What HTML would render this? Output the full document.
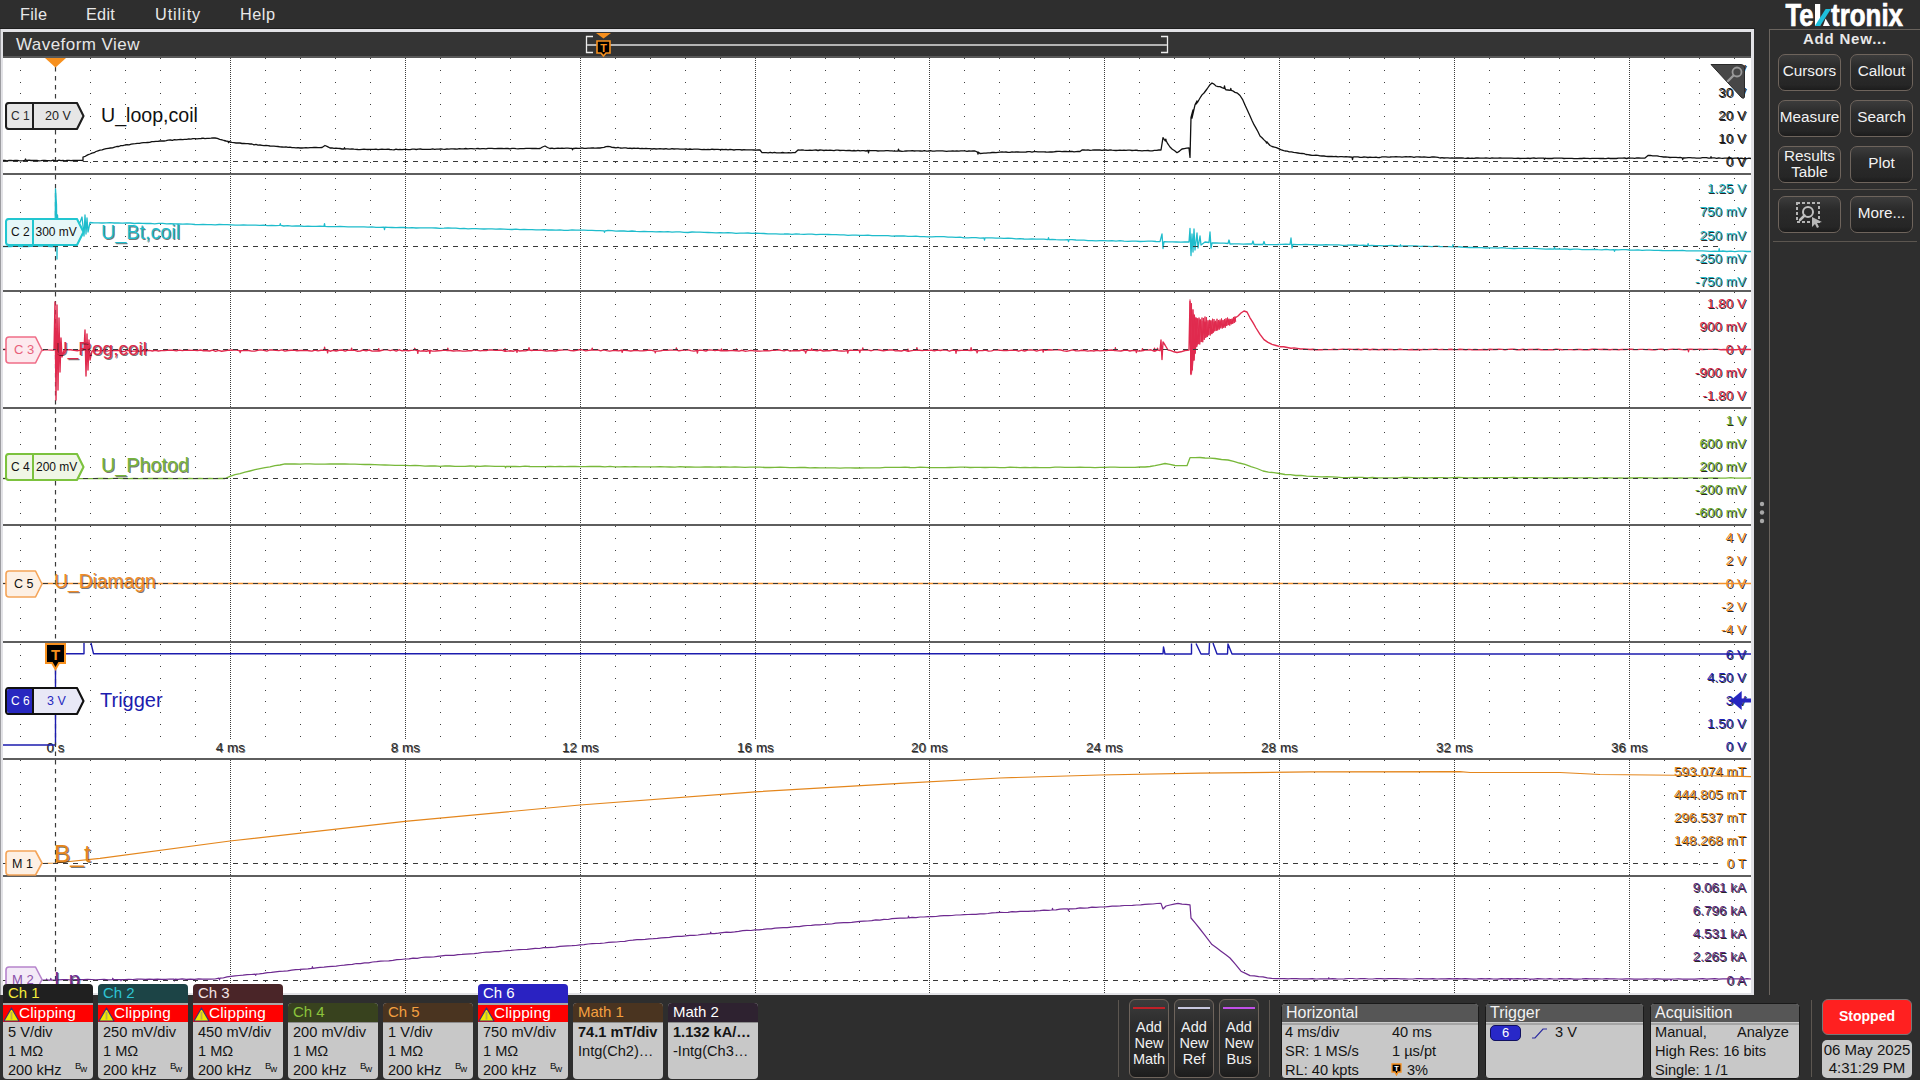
<!DOCTYPE html><html><head><meta charset="utf-8"><title>Tektronix Waveform View</title><style>html,body{margin:0;padding:0;}body{width:1920px;height:1080px;overflow:hidden;position:relative;background:#2e2e2e;font-family:"Liberation Sans", sans-serif;}.a{position:absolute;white-space:nowrap;}.menu{color:#e8e8e8;font-size:16.3px;top:4.5px;letter-spacing:0.25px}.btn{position:absolute;box-sizing:border-box;border:1px solid #6e645c;border-radius:7px;background:linear-gradient(#3c3c3c,#2b2b2b 35%,#262626 85%,#1c1c1c);color:#f2f2f2;font-size:15px;text-align:center;}.bdg{position:absolute;box-sizing:border-box;border-radius:4px;overflow:hidden;background:#c8c8c8;font-size:14px;color:#141414;}.bh{position:absolute;left:0;right:0;top:0;height:19px;padding-left:5px;line-height:17px;font-size:15px;}.ln{position:absolute;left:5px;font-size:14.6px;}.bw{position:absolute;font-size:9.5px;color:#111;}.sl{position:absolute;white-space:nowrap;height:14px;line-height:14px;font-size:13.5px;background:#fff;text-shadow:1px 1px 0 rgba(0,0,0,.85);padding-left:1px;padding-right:1px}</style></head><body><div class="a menu" style="left:20px;letter-spacing:0.25px">File</div><div class="a menu" style="left:86px;letter-spacing:0.25px">Edit</div><div class="a menu" style="left:155px;letter-spacing:0.9px">Utility</div><div class="a menu" style="left:240px;letter-spacing:0.5px">Help</div><div class="a" style="left:0;top:28px;width:1755px;height:1px;background:#1e1e1e"></div><div class="a" style="left:0;top:29px;width:1754px;height:966px;background:#e2e2e6"></div><div class="a" style="left:0;top:29px;width:1px;height:966px;background:#9c9ca0"></div><div class="a" style="left:3px;top:32px;width:1748px;height:24px;background:#343434"></div><div class="a" style="left:3px;top:56px;width:1748px;height:2px;background:#595959"></div><div class="a" style="left:3px;top:58px;width:1748px;height:935px;background:#ffffff"></div><div class="a" style="left:16px;top:35px;color:#e6e6e6;font-size:17px;letter-spacing:0.45px">Waveform View</div><svg class="a" style="left:0;top:0" width="1920" height="1080" viewBox="0 0 1920 1080"><path d="M593 36.5H586.5V52.5H593M1161 36.5H1167.5V52.5H1161" fill="none" stroke="#ececec" stroke-width="1.3"/><rect x="587" y="44" width="580" height="2" fill="#b4b4b4"/><path d="M20 58h1v1h-1zM90 58h1v1h-1zM125 58h1v1h-1zM160 58h1v1h-1zM195 58h1v1h-1zM265 58h1v1h-1zM300 58h1v1h-1zM335 58h1v1h-1zM370 58h1v1h-1zM440 58h1v1h-1zM475 58h1v1h-1zM510 58h1v1h-1zM545 58h1v1h-1zM615 58h1v1h-1zM650 58h1v1h-1zM685 58h1v1h-1zM720 58h1v1h-1zM790 58h1v1h-1zM825 58h1v1h-1zM859 58h1v1h-1zM894 58h1v1h-1zM964 58h1v1h-1zM999 58h1v1h-1zM1034 58h1v1h-1zM1069 58h1v1h-1zM1139 58h1v1h-1zM1174 58h1v1h-1zM1209 58h1v1h-1zM1244 58h1v1h-1zM1314 58h1v1h-1zM1349 58h1v1h-1zM1384 58h1v1h-1zM1419 58h1v1h-1zM1489 58h1v1h-1zM1524 58h1v1h-1zM1559 58h1v1h-1zM1594 58h1v1h-1zM1664 58h1v1h-1zM1699 58h1v1h-1zM1734 58h1v1h-1zM20 70h1v1h-1zM90 70h1v1h-1zM125 70h1v1h-1zM160 70h1v1h-1zM195 70h1v1h-1zM265 70h1v1h-1zM300 70h1v1h-1zM335 70h1v1h-1zM370 70h1v1h-1zM440 70h1v1h-1zM475 70h1v1h-1zM510 70h1v1h-1zM545 70h1v1h-1zM615 70h1v1h-1zM650 70h1v1h-1zM685 70h1v1h-1zM720 70h1v1h-1zM790 70h1v1h-1zM825 70h1v1h-1zM859 70h1v1h-1zM894 70h1v1h-1zM964 70h1v1h-1zM999 70h1v1h-1zM1034 70h1v1h-1zM1069 70h1v1h-1zM1139 70h1v1h-1zM1174 70h1v1h-1zM1209 70h1v1h-1zM1244 70h1v1h-1zM1314 70h1v1h-1zM1349 70h1v1h-1zM1384 70h1v1h-1zM1419 70h1v1h-1zM1489 70h1v1h-1zM1524 70h1v1h-1zM1559 70h1v1h-1zM1594 70h1v1h-1zM1664 70h1v1h-1zM1699 70h1v1h-1zM1734 70h1v1h-1zM20 82h1v1h-1zM90 82h1v1h-1zM125 82h1v1h-1zM160 82h1v1h-1zM195 82h1v1h-1zM265 82h1v1h-1zM300 82h1v1h-1zM335 82h1v1h-1zM370 82h1v1h-1zM440 82h1v1h-1zM475 82h1v1h-1zM510 82h1v1h-1zM545 82h1v1h-1zM615 82h1v1h-1zM650 82h1v1h-1zM685 82h1v1h-1zM720 82h1v1h-1zM790 82h1v1h-1zM825 82h1v1h-1zM859 82h1v1h-1zM894 82h1v1h-1zM964 82h1v1h-1zM999 82h1v1h-1zM1034 82h1v1h-1zM1069 82h1v1h-1zM1139 82h1v1h-1zM1174 82h1v1h-1zM1209 82h1v1h-1zM1244 82h1v1h-1zM1314 82h1v1h-1zM1349 82h1v1h-1zM1384 82h1v1h-1zM1419 82h1v1h-1zM1489 82h1v1h-1zM1524 82h1v1h-1zM1559 82h1v1h-1zM1594 82h1v1h-1zM1664 82h1v1h-1zM1699 82h1v1h-1zM1734 82h1v1h-1zM20 93h1v1h-1zM90 93h1v1h-1zM125 93h1v1h-1zM160 93h1v1h-1zM195 93h1v1h-1zM265 93h1v1h-1zM300 93h1v1h-1zM335 93h1v1h-1zM370 93h1v1h-1zM440 93h1v1h-1zM475 93h1v1h-1zM510 93h1v1h-1zM545 93h1v1h-1zM615 93h1v1h-1zM650 93h1v1h-1zM685 93h1v1h-1zM720 93h1v1h-1zM790 93h1v1h-1zM825 93h1v1h-1zM859 93h1v1h-1zM894 93h1v1h-1zM964 93h1v1h-1zM999 93h1v1h-1zM1034 93h1v1h-1zM1069 93h1v1h-1zM1139 93h1v1h-1zM1174 93h1v1h-1zM1209 93h1v1h-1zM1244 93h1v1h-1zM1314 93h1v1h-1zM1349 93h1v1h-1zM1384 93h1v1h-1zM1419 93h1v1h-1zM1489 93h1v1h-1zM1524 93h1v1h-1zM1559 93h1v1h-1zM1594 93h1v1h-1zM1664 93h1v1h-1zM1699 93h1v1h-1zM1734 93h1v1h-1zM20 104h1v1h-1zM90 104h1v1h-1zM125 104h1v1h-1zM160 104h1v1h-1zM195 104h1v1h-1zM265 104h1v1h-1zM300 104h1v1h-1zM335 104h1v1h-1zM370 104h1v1h-1zM440 104h1v1h-1zM475 104h1v1h-1zM510 104h1v1h-1zM545 104h1v1h-1zM615 104h1v1h-1zM650 104h1v1h-1zM685 104h1v1h-1zM720 104h1v1h-1zM790 104h1v1h-1zM825 104h1v1h-1zM859 104h1v1h-1zM894 104h1v1h-1zM964 104h1v1h-1zM999 104h1v1h-1zM1034 104h1v1h-1zM1069 104h1v1h-1zM1139 104h1v1h-1zM1174 104h1v1h-1zM1209 104h1v1h-1zM1244 104h1v1h-1zM1314 104h1v1h-1zM1349 104h1v1h-1zM1384 104h1v1h-1zM1419 104h1v1h-1zM1489 104h1v1h-1zM1524 104h1v1h-1zM1559 104h1v1h-1zM1594 104h1v1h-1zM1664 104h1v1h-1zM1699 104h1v1h-1zM1734 104h1v1h-1zM20 116h1v1h-1zM90 116h1v1h-1zM125 116h1v1h-1zM160 116h1v1h-1zM195 116h1v1h-1zM265 116h1v1h-1zM300 116h1v1h-1zM335 116h1v1h-1zM370 116h1v1h-1zM440 116h1v1h-1zM475 116h1v1h-1zM510 116h1v1h-1zM545 116h1v1h-1zM615 116h1v1h-1zM650 116h1v1h-1zM685 116h1v1h-1zM720 116h1v1h-1zM790 116h1v1h-1zM825 116h1v1h-1zM859 116h1v1h-1zM894 116h1v1h-1zM964 116h1v1h-1zM999 116h1v1h-1zM1034 116h1v1h-1zM1069 116h1v1h-1zM1139 116h1v1h-1zM1174 116h1v1h-1zM1209 116h1v1h-1zM1244 116h1v1h-1zM1314 116h1v1h-1zM1349 116h1v1h-1zM1384 116h1v1h-1zM1419 116h1v1h-1zM1489 116h1v1h-1zM1524 116h1v1h-1zM1559 116h1v1h-1zM1594 116h1v1h-1zM1664 116h1v1h-1zM1699 116h1v1h-1zM1734 116h1v1h-1zM20 128h1v1h-1zM90 128h1v1h-1zM125 128h1v1h-1zM160 128h1v1h-1zM195 128h1v1h-1zM265 128h1v1h-1zM300 128h1v1h-1zM335 128h1v1h-1zM370 128h1v1h-1zM440 128h1v1h-1zM475 128h1v1h-1zM510 128h1v1h-1zM545 128h1v1h-1zM615 128h1v1h-1zM650 128h1v1h-1zM685 128h1v1h-1zM720 128h1v1h-1zM790 128h1v1h-1zM825 128h1v1h-1zM859 128h1v1h-1zM894 128h1v1h-1zM964 128h1v1h-1zM999 128h1v1h-1zM1034 128h1v1h-1zM1069 128h1v1h-1zM1139 128h1v1h-1zM1174 128h1v1h-1zM1209 128h1v1h-1zM1244 128h1v1h-1zM1314 128h1v1h-1zM1349 128h1v1h-1zM1384 128h1v1h-1zM1419 128h1v1h-1zM1489 128h1v1h-1zM1524 128h1v1h-1zM1559 128h1v1h-1zM1594 128h1v1h-1zM1664 128h1v1h-1zM1699 128h1v1h-1zM1734 128h1v1h-1zM20 139h1v1h-1zM90 139h1v1h-1zM125 139h1v1h-1zM160 139h1v1h-1zM195 139h1v1h-1zM265 139h1v1h-1zM300 139h1v1h-1zM335 139h1v1h-1zM370 139h1v1h-1zM440 139h1v1h-1zM475 139h1v1h-1zM510 139h1v1h-1zM545 139h1v1h-1zM615 139h1v1h-1zM650 139h1v1h-1zM685 139h1v1h-1zM720 139h1v1h-1zM790 139h1v1h-1zM825 139h1v1h-1zM859 139h1v1h-1zM894 139h1v1h-1zM964 139h1v1h-1zM999 139h1v1h-1zM1034 139h1v1h-1zM1069 139h1v1h-1zM1139 139h1v1h-1zM1174 139h1v1h-1zM1209 139h1v1h-1zM1244 139h1v1h-1zM1314 139h1v1h-1zM1349 139h1v1h-1zM1384 139h1v1h-1zM1419 139h1v1h-1zM1489 139h1v1h-1zM1524 139h1v1h-1zM1559 139h1v1h-1zM1594 139h1v1h-1zM1664 139h1v1h-1zM1699 139h1v1h-1zM1734 139h1v1h-1zM20 150h1v1h-1zM90 150h1v1h-1zM125 150h1v1h-1zM160 150h1v1h-1zM195 150h1v1h-1zM265 150h1v1h-1zM300 150h1v1h-1zM335 150h1v1h-1zM370 150h1v1h-1zM440 150h1v1h-1zM475 150h1v1h-1zM510 150h1v1h-1zM545 150h1v1h-1zM615 150h1v1h-1zM650 150h1v1h-1zM685 150h1v1h-1zM720 150h1v1h-1zM790 150h1v1h-1zM825 150h1v1h-1zM859 150h1v1h-1zM894 150h1v1h-1zM964 150h1v1h-1zM999 150h1v1h-1zM1034 150h1v1h-1zM1069 150h1v1h-1zM1139 150h1v1h-1zM1174 150h1v1h-1zM1209 150h1v1h-1zM1244 150h1v1h-1zM1314 150h1v1h-1zM1349 150h1v1h-1zM1384 150h1v1h-1zM1419 150h1v1h-1zM1489 150h1v1h-1zM1524 150h1v1h-1zM1559 150h1v1h-1zM1594 150h1v1h-1zM1664 150h1v1h-1zM1699 150h1v1h-1zM1734 150h1v1h-1zM20 162h1v1h-1zM90 162h1v1h-1zM125 162h1v1h-1zM160 162h1v1h-1zM195 162h1v1h-1zM265 162h1v1h-1zM300 162h1v1h-1zM335 162h1v1h-1zM370 162h1v1h-1zM440 162h1v1h-1zM475 162h1v1h-1zM510 162h1v1h-1zM545 162h1v1h-1zM615 162h1v1h-1zM650 162h1v1h-1zM685 162h1v1h-1zM720 162h1v1h-1zM790 162h1v1h-1zM825 162h1v1h-1zM859 162h1v1h-1zM894 162h1v1h-1zM964 162h1v1h-1zM999 162h1v1h-1zM1034 162h1v1h-1zM1069 162h1v1h-1zM1139 162h1v1h-1zM1174 162h1v1h-1zM1209 162h1v1h-1zM1244 162h1v1h-1zM1314 162h1v1h-1zM1349 162h1v1h-1zM1384 162h1v1h-1zM1419 162h1v1h-1zM1489 162h1v1h-1zM1524 162h1v1h-1zM1559 162h1v1h-1zM1594 162h1v1h-1zM1664 162h1v1h-1zM1699 162h1v1h-1zM1734 162h1v1h-1zM20 178h1v1h-1zM90 178h1v1h-1zM125 178h1v1h-1zM160 178h1v1h-1zM195 178h1v1h-1zM265 178h1v1h-1zM300 178h1v1h-1zM335 178h1v1h-1zM370 178h1v1h-1zM440 178h1v1h-1zM475 178h1v1h-1zM510 178h1v1h-1zM545 178h1v1h-1zM615 178h1v1h-1zM650 178h1v1h-1zM685 178h1v1h-1zM720 178h1v1h-1zM790 178h1v1h-1zM825 178h1v1h-1zM859 178h1v1h-1zM894 178h1v1h-1zM964 178h1v1h-1zM999 178h1v1h-1zM1034 178h1v1h-1zM1069 178h1v1h-1zM1139 178h1v1h-1zM1174 178h1v1h-1zM1209 178h1v1h-1zM1244 178h1v1h-1zM1314 178h1v1h-1zM1349 178h1v1h-1zM1384 178h1v1h-1zM1419 178h1v1h-1zM1489 178h1v1h-1zM1524 178h1v1h-1zM1559 178h1v1h-1zM1594 178h1v1h-1zM1664 178h1v1h-1zM1699 178h1v1h-1zM1734 178h1v1h-1zM20 189h1v1h-1zM90 189h1v1h-1zM125 189h1v1h-1zM160 189h1v1h-1zM195 189h1v1h-1zM265 189h1v1h-1zM300 189h1v1h-1zM335 189h1v1h-1zM370 189h1v1h-1zM440 189h1v1h-1zM475 189h1v1h-1zM510 189h1v1h-1zM545 189h1v1h-1zM615 189h1v1h-1zM650 189h1v1h-1zM685 189h1v1h-1zM720 189h1v1h-1zM790 189h1v1h-1zM825 189h1v1h-1zM859 189h1v1h-1zM894 189h1v1h-1zM964 189h1v1h-1zM999 189h1v1h-1zM1034 189h1v1h-1zM1069 189h1v1h-1zM1139 189h1v1h-1zM1174 189h1v1h-1zM1209 189h1v1h-1zM1244 189h1v1h-1zM1314 189h1v1h-1zM1349 189h1v1h-1zM1384 189h1v1h-1zM1419 189h1v1h-1zM1489 189h1v1h-1zM1524 189h1v1h-1zM1559 189h1v1h-1zM1594 189h1v1h-1zM1664 189h1v1h-1zM1699 189h1v1h-1zM1734 189h1v1h-1zM20 200h1v1h-1zM90 200h1v1h-1zM125 200h1v1h-1zM160 200h1v1h-1zM195 200h1v1h-1zM265 200h1v1h-1zM300 200h1v1h-1zM335 200h1v1h-1zM370 200h1v1h-1zM440 200h1v1h-1zM475 200h1v1h-1zM510 200h1v1h-1zM545 200h1v1h-1zM615 200h1v1h-1zM650 200h1v1h-1zM685 200h1v1h-1zM720 200h1v1h-1zM790 200h1v1h-1zM825 200h1v1h-1zM859 200h1v1h-1zM894 200h1v1h-1zM964 200h1v1h-1zM999 200h1v1h-1zM1034 200h1v1h-1zM1069 200h1v1h-1zM1139 200h1v1h-1zM1174 200h1v1h-1zM1209 200h1v1h-1zM1244 200h1v1h-1zM1314 200h1v1h-1zM1349 200h1v1h-1zM1384 200h1v1h-1zM1419 200h1v1h-1zM1489 200h1v1h-1zM1524 200h1v1h-1zM1559 200h1v1h-1zM1594 200h1v1h-1zM1664 200h1v1h-1zM1699 200h1v1h-1zM1734 200h1v1h-1zM20 212h1v1h-1zM90 212h1v1h-1zM125 212h1v1h-1zM160 212h1v1h-1zM195 212h1v1h-1zM265 212h1v1h-1zM300 212h1v1h-1zM335 212h1v1h-1zM370 212h1v1h-1zM440 212h1v1h-1zM475 212h1v1h-1zM510 212h1v1h-1zM545 212h1v1h-1zM615 212h1v1h-1zM650 212h1v1h-1zM685 212h1v1h-1zM720 212h1v1h-1zM790 212h1v1h-1zM825 212h1v1h-1zM859 212h1v1h-1zM894 212h1v1h-1zM964 212h1v1h-1zM999 212h1v1h-1zM1034 212h1v1h-1zM1069 212h1v1h-1zM1139 212h1v1h-1zM1174 212h1v1h-1zM1209 212h1v1h-1zM1244 212h1v1h-1zM1314 212h1v1h-1zM1349 212h1v1h-1zM1384 212h1v1h-1zM1419 212h1v1h-1zM1489 212h1v1h-1zM1524 212h1v1h-1zM1559 212h1v1h-1zM1594 212h1v1h-1zM1664 212h1v1h-1zM1699 212h1v1h-1zM1734 212h1v1h-1zM20 224h1v1h-1zM90 224h1v1h-1zM125 224h1v1h-1zM160 224h1v1h-1zM195 224h1v1h-1zM265 224h1v1h-1zM300 224h1v1h-1zM335 224h1v1h-1zM370 224h1v1h-1zM440 224h1v1h-1zM475 224h1v1h-1zM510 224h1v1h-1zM545 224h1v1h-1zM615 224h1v1h-1zM650 224h1v1h-1zM685 224h1v1h-1zM720 224h1v1h-1zM790 224h1v1h-1zM825 224h1v1h-1zM859 224h1v1h-1zM894 224h1v1h-1zM964 224h1v1h-1zM999 224h1v1h-1zM1034 224h1v1h-1zM1069 224h1v1h-1zM1139 224h1v1h-1zM1174 224h1v1h-1zM1209 224h1v1h-1zM1244 224h1v1h-1zM1314 224h1v1h-1zM1349 224h1v1h-1zM1384 224h1v1h-1zM1419 224h1v1h-1zM1489 224h1v1h-1zM1524 224h1v1h-1zM1559 224h1v1h-1zM1594 224h1v1h-1zM1664 224h1v1h-1zM1699 224h1v1h-1zM1734 224h1v1h-1zM20 236h1v1h-1zM90 236h1v1h-1zM125 236h1v1h-1zM160 236h1v1h-1zM195 236h1v1h-1zM265 236h1v1h-1zM300 236h1v1h-1zM335 236h1v1h-1zM370 236h1v1h-1zM440 236h1v1h-1zM475 236h1v1h-1zM510 236h1v1h-1zM545 236h1v1h-1zM615 236h1v1h-1zM650 236h1v1h-1zM685 236h1v1h-1zM720 236h1v1h-1zM790 236h1v1h-1zM825 236h1v1h-1zM859 236h1v1h-1zM894 236h1v1h-1zM964 236h1v1h-1zM999 236h1v1h-1zM1034 236h1v1h-1zM1069 236h1v1h-1zM1139 236h1v1h-1zM1174 236h1v1h-1zM1209 236h1v1h-1zM1244 236h1v1h-1zM1314 236h1v1h-1zM1349 236h1v1h-1zM1384 236h1v1h-1zM1419 236h1v1h-1zM1489 236h1v1h-1zM1524 236h1v1h-1zM1559 236h1v1h-1zM1594 236h1v1h-1zM1664 236h1v1h-1zM1699 236h1v1h-1zM1734 236h1v1h-1zM20 248h1v1h-1zM90 248h1v1h-1zM125 248h1v1h-1zM160 248h1v1h-1zM195 248h1v1h-1zM265 248h1v1h-1zM300 248h1v1h-1zM335 248h1v1h-1zM370 248h1v1h-1zM440 248h1v1h-1zM475 248h1v1h-1zM510 248h1v1h-1zM545 248h1v1h-1zM615 248h1v1h-1zM650 248h1v1h-1zM685 248h1v1h-1zM720 248h1v1h-1zM790 248h1v1h-1zM825 248h1v1h-1zM859 248h1v1h-1zM894 248h1v1h-1zM964 248h1v1h-1zM999 248h1v1h-1zM1034 248h1v1h-1zM1069 248h1v1h-1zM1139 248h1v1h-1zM1174 248h1v1h-1zM1209 248h1v1h-1zM1244 248h1v1h-1zM1314 248h1v1h-1zM1349 248h1v1h-1zM1384 248h1v1h-1zM1419 248h1v1h-1zM1489 248h1v1h-1zM1524 248h1v1h-1zM1559 248h1v1h-1zM1594 248h1v1h-1zM1664 248h1v1h-1zM1699 248h1v1h-1zM1734 248h1v1h-1zM20 259h1v1h-1zM90 259h1v1h-1zM125 259h1v1h-1zM160 259h1v1h-1zM195 259h1v1h-1zM265 259h1v1h-1zM300 259h1v1h-1zM335 259h1v1h-1zM370 259h1v1h-1zM440 259h1v1h-1zM475 259h1v1h-1zM510 259h1v1h-1zM545 259h1v1h-1zM615 259h1v1h-1zM650 259h1v1h-1zM685 259h1v1h-1zM720 259h1v1h-1zM790 259h1v1h-1zM825 259h1v1h-1zM859 259h1v1h-1zM894 259h1v1h-1zM964 259h1v1h-1zM999 259h1v1h-1zM1034 259h1v1h-1zM1069 259h1v1h-1zM1139 259h1v1h-1zM1174 259h1v1h-1zM1209 259h1v1h-1zM1244 259h1v1h-1zM1314 259h1v1h-1zM1349 259h1v1h-1zM1384 259h1v1h-1zM1419 259h1v1h-1zM1489 259h1v1h-1zM1524 259h1v1h-1zM1559 259h1v1h-1zM1594 259h1v1h-1zM1664 259h1v1h-1zM1699 259h1v1h-1zM1734 259h1v1h-1zM20 270h1v1h-1zM90 270h1v1h-1zM125 270h1v1h-1zM160 270h1v1h-1zM195 270h1v1h-1zM265 270h1v1h-1zM300 270h1v1h-1zM335 270h1v1h-1zM370 270h1v1h-1zM440 270h1v1h-1zM475 270h1v1h-1zM510 270h1v1h-1zM545 270h1v1h-1zM615 270h1v1h-1zM650 270h1v1h-1zM685 270h1v1h-1zM720 270h1v1h-1zM790 270h1v1h-1zM825 270h1v1h-1zM859 270h1v1h-1zM894 270h1v1h-1zM964 270h1v1h-1zM999 270h1v1h-1zM1034 270h1v1h-1zM1069 270h1v1h-1zM1139 270h1v1h-1zM1174 270h1v1h-1zM1209 270h1v1h-1zM1244 270h1v1h-1zM1314 270h1v1h-1zM1349 270h1v1h-1zM1384 270h1v1h-1zM1419 270h1v1h-1zM1489 270h1v1h-1zM1524 270h1v1h-1zM1559 270h1v1h-1zM1594 270h1v1h-1zM1664 270h1v1h-1zM1699 270h1v1h-1zM1734 270h1v1h-1zM20 282h1v1h-1zM90 282h1v1h-1zM125 282h1v1h-1zM160 282h1v1h-1zM195 282h1v1h-1zM265 282h1v1h-1zM300 282h1v1h-1zM335 282h1v1h-1zM370 282h1v1h-1zM440 282h1v1h-1zM475 282h1v1h-1zM510 282h1v1h-1zM545 282h1v1h-1zM615 282h1v1h-1zM650 282h1v1h-1zM685 282h1v1h-1zM720 282h1v1h-1zM790 282h1v1h-1zM825 282h1v1h-1zM859 282h1v1h-1zM894 282h1v1h-1zM964 282h1v1h-1zM999 282h1v1h-1zM1034 282h1v1h-1zM1069 282h1v1h-1zM1139 282h1v1h-1zM1174 282h1v1h-1zM1209 282h1v1h-1zM1244 282h1v1h-1zM1314 282h1v1h-1zM1349 282h1v1h-1zM1384 282h1v1h-1zM1419 282h1v1h-1zM1489 282h1v1h-1zM1524 282h1v1h-1zM1559 282h1v1h-1zM1594 282h1v1h-1zM1664 282h1v1h-1zM1699 282h1v1h-1zM1734 282h1v1h-1zM20 292h1v1h-1zM90 292h1v1h-1zM125 292h1v1h-1zM160 292h1v1h-1zM195 292h1v1h-1zM265 292h1v1h-1zM300 292h1v1h-1zM335 292h1v1h-1zM370 292h1v1h-1zM440 292h1v1h-1zM475 292h1v1h-1zM510 292h1v1h-1zM545 292h1v1h-1zM615 292h1v1h-1zM650 292h1v1h-1zM685 292h1v1h-1zM720 292h1v1h-1zM790 292h1v1h-1zM825 292h1v1h-1zM859 292h1v1h-1zM894 292h1v1h-1zM964 292h1v1h-1zM999 292h1v1h-1zM1034 292h1v1h-1zM1069 292h1v1h-1zM1139 292h1v1h-1zM1174 292h1v1h-1zM1209 292h1v1h-1zM1244 292h1v1h-1zM1314 292h1v1h-1zM1349 292h1v1h-1zM1384 292h1v1h-1zM1419 292h1v1h-1zM1489 292h1v1h-1zM1524 292h1v1h-1zM1559 292h1v1h-1zM1594 292h1v1h-1zM1664 292h1v1h-1zM1699 292h1v1h-1zM1734 292h1v1h-1zM20 304h1v1h-1zM90 304h1v1h-1zM125 304h1v1h-1zM160 304h1v1h-1zM195 304h1v1h-1zM265 304h1v1h-1zM300 304h1v1h-1zM335 304h1v1h-1zM370 304h1v1h-1zM440 304h1v1h-1zM475 304h1v1h-1zM510 304h1v1h-1zM545 304h1v1h-1zM615 304h1v1h-1zM650 304h1v1h-1zM685 304h1v1h-1zM720 304h1v1h-1zM790 304h1v1h-1zM825 304h1v1h-1zM859 304h1v1h-1zM894 304h1v1h-1zM964 304h1v1h-1zM999 304h1v1h-1zM1034 304h1v1h-1zM1069 304h1v1h-1zM1139 304h1v1h-1zM1174 304h1v1h-1zM1209 304h1v1h-1zM1244 304h1v1h-1zM1314 304h1v1h-1zM1349 304h1v1h-1zM1384 304h1v1h-1zM1419 304h1v1h-1zM1489 304h1v1h-1zM1524 304h1v1h-1zM1559 304h1v1h-1zM1594 304h1v1h-1zM1664 304h1v1h-1zM1699 304h1v1h-1zM1734 304h1v1h-1zM20 316h1v1h-1zM90 316h1v1h-1zM125 316h1v1h-1zM160 316h1v1h-1zM195 316h1v1h-1zM265 316h1v1h-1zM300 316h1v1h-1zM335 316h1v1h-1zM370 316h1v1h-1zM440 316h1v1h-1zM475 316h1v1h-1zM510 316h1v1h-1zM545 316h1v1h-1zM615 316h1v1h-1zM650 316h1v1h-1zM685 316h1v1h-1zM720 316h1v1h-1zM790 316h1v1h-1zM825 316h1v1h-1zM859 316h1v1h-1zM894 316h1v1h-1zM964 316h1v1h-1zM999 316h1v1h-1zM1034 316h1v1h-1zM1069 316h1v1h-1zM1139 316h1v1h-1zM1174 316h1v1h-1zM1209 316h1v1h-1zM1244 316h1v1h-1zM1314 316h1v1h-1zM1349 316h1v1h-1zM1384 316h1v1h-1zM1419 316h1v1h-1zM1489 316h1v1h-1zM1524 316h1v1h-1zM1559 316h1v1h-1zM1594 316h1v1h-1zM1664 316h1v1h-1zM1699 316h1v1h-1zM1734 316h1v1h-1zM20 327h1v1h-1zM90 327h1v1h-1zM125 327h1v1h-1zM160 327h1v1h-1zM195 327h1v1h-1zM265 327h1v1h-1zM300 327h1v1h-1zM335 327h1v1h-1zM370 327h1v1h-1zM440 327h1v1h-1zM475 327h1v1h-1zM510 327h1v1h-1zM545 327h1v1h-1zM615 327h1v1h-1zM650 327h1v1h-1zM685 327h1v1h-1zM720 327h1v1h-1zM790 327h1v1h-1zM825 327h1v1h-1zM859 327h1v1h-1zM894 327h1v1h-1zM964 327h1v1h-1zM999 327h1v1h-1zM1034 327h1v1h-1zM1069 327h1v1h-1zM1139 327h1v1h-1zM1174 327h1v1h-1zM1209 327h1v1h-1zM1244 327h1v1h-1zM1314 327h1v1h-1zM1349 327h1v1h-1zM1384 327h1v1h-1zM1419 327h1v1h-1zM1489 327h1v1h-1zM1524 327h1v1h-1zM1559 327h1v1h-1zM1594 327h1v1h-1zM1664 327h1v1h-1zM1699 327h1v1h-1zM1734 327h1v1h-1zM20 338h1v1h-1zM90 338h1v1h-1zM125 338h1v1h-1zM160 338h1v1h-1zM195 338h1v1h-1zM265 338h1v1h-1zM300 338h1v1h-1zM335 338h1v1h-1zM370 338h1v1h-1zM440 338h1v1h-1zM475 338h1v1h-1zM510 338h1v1h-1zM545 338h1v1h-1zM615 338h1v1h-1zM650 338h1v1h-1zM685 338h1v1h-1zM720 338h1v1h-1zM790 338h1v1h-1zM825 338h1v1h-1zM859 338h1v1h-1zM894 338h1v1h-1zM964 338h1v1h-1zM999 338h1v1h-1zM1034 338h1v1h-1zM1069 338h1v1h-1zM1139 338h1v1h-1zM1174 338h1v1h-1zM1209 338h1v1h-1zM1244 338h1v1h-1zM1314 338h1v1h-1zM1349 338h1v1h-1zM1384 338h1v1h-1zM1419 338h1v1h-1zM1489 338h1v1h-1zM1524 338h1v1h-1zM1559 338h1v1h-1zM1594 338h1v1h-1zM1664 338h1v1h-1zM1699 338h1v1h-1zM1734 338h1v1h-1zM20 350h1v1h-1zM90 350h1v1h-1zM125 350h1v1h-1zM160 350h1v1h-1zM195 350h1v1h-1zM265 350h1v1h-1zM300 350h1v1h-1zM335 350h1v1h-1zM370 350h1v1h-1zM440 350h1v1h-1zM475 350h1v1h-1zM510 350h1v1h-1zM545 350h1v1h-1zM615 350h1v1h-1zM650 350h1v1h-1zM685 350h1v1h-1zM720 350h1v1h-1zM790 350h1v1h-1zM825 350h1v1h-1zM859 350h1v1h-1zM894 350h1v1h-1zM964 350h1v1h-1zM999 350h1v1h-1zM1034 350h1v1h-1zM1069 350h1v1h-1zM1139 350h1v1h-1zM1174 350h1v1h-1zM1209 350h1v1h-1zM1244 350h1v1h-1zM1314 350h1v1h-1zM1349 350h1v1h-1zM1384 350h1v1h-1zM1419 350h1v1h-1zM1489 350h1v1h-1zM1524 350h1v1h-1zM1559 350h1v1h-1zM1594 350h1v1h-1zM1664 350h1v1h-1zM1699 350h1v1h-1zM1734 350h1v1h-1zM20 362h1v1h-1zM90 362h1v1h-1zM125 362h1v1h-1zM160 362h1v1h-1zM195 362h1v1h-1zM265 362h1v1h-1zM300 362h1v1h-1zM335 362h1v1h-1zM370 362h1v1h-1zM440 362h1v1h-1zM475 362h1v1h-1zM510 362h1v1h-1zM545 362h1v1h-1zM615 362h1v1h-1zM650 362h1v1h-1zM685 362h1v1h-1zM720 362h1v1h-1zM790 362h1v1h-1zM825 362h1v1h-1zM859 362h1v1h-1zM894 362h1v1h-1zM964 362h1v1h-1zM999 362h1v1h-1zM1034 362h1v1h-1zM1069 362h1v1h-1zM1139 362h1v1h-1zM1174 362h1v1h-1zM1209 362h1v1h-1zM1244 362h1v1h-1zM1314 362h1v1h-1zM1349 362h1v1h-1zM1384 362h1v1h-1zM1419 362h1v1h-1zM1489 362h1v1h-1zM1524 362h1v1h-1zM1559 362h1v1h-1zM1594 362h1v1h-1zM1664 362h1v1h-1zM1699 362h1v1h-1zM1734 362h1v1h-1zM20 373h1v1h-1zM90 373h1v1h-1zM125 373h1v1h-1zM160 373h1v1h-1zM195 373h1v1h-1zM265 373h1v1h-1zM300 373h1v1h-1zM335 373h1v1h-1zM370 373h1v1h-1zM440 373h1v1h-1zM475 373h1v1h-1zM510 373h1v1h-1zM545 373h1v1h-1zM615 373h1v1h-1zM650 373h1v1h-1zM685 373h1v1h-1zM720 373h1v1h-1zM790 373h1v1h-1zM825 373h1v1h-1zM859 373h1v1h-1zM894 373h1v1h-1zM964 373h1v1h-1zM999 373h1v1h-1zM1034 373h1v1h-1zM1069 373h1v1h-1zM1139 373h1v1h-1zM1174 373h1v1h-1zM1209 373h1v1h-1zM1244 373h1v1h-1zM1314 373h1v1h-1zM1349 373h1v1h-1zM1384 373h1v1h-1zM1419 373h1v1h-1zM1489 373h1v1h-1zM1524 373h1v1h-1zM1559 373h1v1h-1zM1594 373h1v1h-1zM1664 373h1v1h-1zM1699 373h1v1h-1zM1734 373h1v1h-1zM20 384h1v1h-1zM90 384h1v1h-1zM125 384h1v1h-1zM160 384h1v1h-1zM195 384h1v1h-1zM265 384h1v1h-1zM300 384h1v1h-1zM335 384h1v1h-1zM370 384h1v1h-1zM440 384h1v1h-1zM475 384h1v1h-1zM510 384h1v1h-1zM545 384h1v1h-1zM615 384h1v1h-1zM650 384h1v1h-1zM685 384h1v1h-1zM720 384h1v1h-1zM790 384h1v1h-1zM825 384h1v1h-1zM859 384h1v1h-1zM894 384h1v1h-1zM964 384h1v1h-1zM999 384h1v1h-1zM1034 384h1v1h-1zM1069 384h1v1h-1zM1139 384h1v1h-1zM1174 384h1v1h-1zM1209 384h1v1h-1zM1244 384h1v1h-1zM1314 384h1v1h-1zM1349 384h1v1h-1zM1384 384h1v1h-1zM1419 384h1v1h-1zM1489 384h1v1h-1zM1524 384h1v1h-1zM1559 384h1v1h-1zM1594 384h1v1h-1zM1664 384h1v1h-1zM1699 384h1v1h-1zM1734 384h1v1h-1zM20 396h1v1h-1zM90 396h1v1h-1zM125 396h1v1h-1zM160 396h1v1h-1zM195 396h1v1h-1zM265 396h1v1h-1zM300 396h1v1h-1zM335 396h1v1h-1zM370 396h1v1h-1zM440 396h1v1h-1zM475 396h1v1h-1zM510 396h1v1h-1zM545 396h1v1h-1zM615 396h1v1h-1zM650 396h1v1h-1zM685 396h1v1h-1zM720 396h1v1h-1zM790 396h1v1h-1zM825 396h1v1h-1zM859 396h1v1h-1zM894 396h1v1h-1zM964 396h1v1h-1zM999 396h1v1h-1zM1034 396h1v1h-1zM1069 396h1v1h-1zM1139 396h1v1h-1zM1174 396h1v1h-1zM1209 396h1v1h-1zM1244 396h1v1h-1zM1314 396h1v1h-1zM1349 396h1v1h-1zM1384 396h1v1h-1zM1419 396h1v1h-1zM1489 396h1v1h-1zM1524 396h1v1h-1zM1559 396h1v1h-1zM1594 396h1v1h-1zM1664 396h1v1h-1zM1699 396h1v1h-1zM1734 396h1v1h-1zM20 410h1v1h-1zM90 410h1v1h-1zM125 410h1v1h-1zM160 410h1v1h-1zM195 410h1v1h-1zM265 410h1v1h-1zM300 410h1v1h-1zM335 410h1v1h-1zM370 410h1v1h-1zM440 410h1v1h-1zM475 410h1v1h-1zM510 410h1v1h-1zM545 410h1v1h-1zM615 410h1v1h-1zM650 410h1v1h-1zM685 410h1v1h-1zM720 410h1v1h-1zM790 410h1v1h-1zM825 410h1v1h-1zM859 410h1v1h-1zM894 410h1v1h-1zM964 410h1v1h-1zM999 410h1v1h-1zM1034 410h1v1h-1zM1069 410h1v1h-1zM1139 410h1v1h-1zM1174 410h1v1h-1zM1209 410h1v1h-1zM1244 410h1v1h-1zM1314 410h1v1h-1zM1349 410h1v1h-1zM1384 410h1v1h-1zM1419 410h1v1h-1zM1489 410h1v1h-1zM1524 410h1v1h-1zM1559 410h1v1h-1zM1594 410h1v1h-1zM1664 410h1v1h-1zM1699 410h1v1h-1zM1734 410h1v1h-1zM20 421h1v1h-1zM90 421h1v1h-1zM125 421h1v1h-1zM160 421h1v1h-1zM195 421h1v1h-1zM265 421h1v1h-1zM300 421h1v1h-1zM335 421h1v1h-1zM370 421h1v1h-1zM440 421h1v1h-1zM475 421h1v1h-1zM510 421h1v1h-1zM545 421h1v1h-1zM615 421h1v1h-1zM650 421h1v1h-1zM685 421h1v1h-1zM720 421h1v1h-1zM790 421h1v1h-1zM825 421h1v1h-1zM859 421h1v1h-1zM894 421h1v1h-1zM964 421h1v1h-1zM999 421h1v1h-1zM1034 421h1v1h-1zM1069 421h1v1h-1zM1139 421h1v1h-1zM1174 421h1v1h-1zM1209 421h1v1h-1zM1244 421h1v1h-1zM1314 421h1v1h-1zM1349 421h1v1h-1zM1384 421h1v1h-1zM1419 421h1v1h-1zM1489 421h1v1h-1zM1524 421h1v1h-1zM1559 421h1v1h-1zM1594 421h1v1h-1zM1664 421h1v1h-1zM1699 421h1v1h-1zM1734 421h1v1h-1zM20 432h1v1h-1zM90 432h1v1h-1zM125 432h1v1h-1zM160 432h1v1h-1zM195 432h1v1h-1zM265 432h1v1h-1zM300 432h1v1h-1zM335 432h1v1h-1zM370 432h1v1h-1zM440 432h1v1h-1zM475 432h1v1h-1zM510 432h1v1h-1zM545 432h1v1h-1zM615 432h1v1h-1zM650 432h1v1h-1zM685 432h1v1h-1zM720 432h1v1h-1zM790 432h1v1h-1zM825 432h1v1h-1zM859 432h1v1h-1zM894 432h1v1h-1zM964 432h1v1h-1zM999 432h1v1h-1zM1034 432h1v1h-1zM1069 432h1v1h-1zM1139 432h1v1h-1zM1174 432h1v1h-1zM1209 432h1v1h-1zM1244 432h1v1h-1zM1314 432h1v1h-1zM1349 432h1v1h-1zM1384 432h1v1h-1zM1419 432h1v1h-1zM1489 432h1v1h-1zM1524 432h1v1h-1zM1559 432h1v1h-1zM1594 432h1v1h-1zM1664 432h1v1h-1zM1699 432h1v1h-1zM1734 432h1v1h-1zM20 444h1v1h-1zM90 444h1v1h-1zM125 444h1v1h-1zM160 444h1v1h-1zM195 444h1v1h-1zM265 444h1v1h-1zM300 444h1v1h-1zM335 444h1v1h-1zM370 444h1v1h-1zM440 444h1v1h-1zM475 444h1v1h-1zM510 444h1v1h-1zM545 444h1v1h-1zM615 444h1v1h-1zM650 444h1v1h-1zM685 444h1v1h-1zM720 444h1v1h-1zM790 444h1v1h-1zM825 444h1v1h-1zM859 444h1v1h-1zM894 444h1v1h-1zM964 444h1v1h-1zM999 444h1v1h-1zM1034 444h1v1h-1zM1069 444h1v1h-1zM1139 444h1v1h-1zM1174 444h1v1h-1zM1209 444h1v1h-1zM1244 444h1v1h-1zM1314 444h1v1h-1zM1349 444h1v1h-1zM1384 444h1v1h-1zM1419 444h1v1h-1zM1489 444h1v1h-1zM1524 444h1v1h-1zM1559 444h1v1h-1zM1594 444h1v1h-1zM1664 444h1v1h-1zM1699 444h1v1h-1zM1734 444h1v1h-1zM20 456h1v1h-1zM90 456h1v1h-1zM125 456h1v1h-1zM160 456h1v1h-1zM195 456h1v1h-1zM265 456h1v1h-1zM300 456h1v1h-1zM335 456h1v1h-1zM370 456h1v1h-1zM440 456h1v1h-1zM475 456h1v1h-1zM510 456h1v1h-1zM545 456h1v1h-1zM615 456h1v1h-1zM650 456h1v1h-1zM685 456h1v1h-1zM720 456h1v1h-1zM790 456h1v1h-1zM825 456h1v1h-1zM859 456h1v1h-1zM894 456h1v1h-1zM964 456h1v1h-1zM999 456h1v1h-1zM1034 456h1v1h-1zM1069 456h1v1h-1zM1139 456h1v1h-1zM1174 456h1v1h-1zM1209 456h1v1h-1zM1244 456h1v1h-1zM1314 456h1v1h-1zM1349 456h1v1h-1zM1384 456h1v1h-1zM1419 456h1v1h-1zM1489 456h1v1h-1zM1524 456h1v1h-1zM1559 456h1v1h-1zM1594 456h1v1h-1zM1664 456h1v1h-1zM1699 456h1v1h-1zM1734 456h1v1h-1zM20 467h1v1h-1zM90 467h1v1h-1zM125 467h1v1h-1zM160 467h1v1h-1zM195 467h1v1h-1zM265 467h1v1h-1zM300 467h1v1h-1zM335 467h1v1h-1zM370 467h1v1h-1zM440 467h1v1h-1zM475 467h1v1h-1zM510 467h1v1h-1zM545 467h1v1h-1zM615 467h1v1h-1zM650 467h1v1h-1zM685 467h1v1h-1zM720 467h1v1h-1zM790 467h1v1h-1zM825 467h1v1h-1zM859 467h1v1h-1zM894 467h1v1h-1zM964 467h1v1h-1zM999 467h1v1h-1zM1034 467h1v1h-1zM1069 467h1v1h-1zM1139 467h1v1h-1zM1174 467h1v1h-1zM1209 467h1v1h-1zM1244 467h1v1h-1zM1314 467h1v1h-1zM1349 467h1v1h-1zM1384 467h1v1h-1zM1419 467h1v1h-1zM1489 467h1v1h-1zM1524 467h1v1h-1zM1559 467h1v1h-1zM1594 467h1v1h-1zM1664 467h1v1h-1zM1699 467h1v1h-1zM1734 467h1v1h-1zM20 478h1v1h-1zM90 478h1v1h-1zM125 478h1v1h-1zM160 478h1v1h-1zM195 478h1v1h-1zM265 478h1v1h-1zM300 478h1v1h-1zM335 478h1v1h-1zM370 478h1v1h-1zM440 478h1v1h-1zM475 478h1v1h-1zM510 478h1v1h-1zM545 478h1v1h-1zM615 478h1v1h-1zM650 478h1v1h-1zM685 478h1v1h-1zM720 478h1v1h-1zM790 478h1v1h-1zM825 478h1v1h-1zM859 478h1v1h-1zM894 478h1v1h-1zM964 478h1v1h-1zM999 478h1v1h-1zM1034 478h1v1h-1zM1069 478h1v1h-1zM1139 478h1v1h-1zM1174 478h1v1h-1zM1209 478h1v1h-1zM1244 478h1v1h-1zM1314 478h1v1h-1zM1349 478h1v1h-1zM1384 478h1v1h-1zM1419 478h1v1h-1zM1489 478h1v1h-1zM1524 478h1v1h-1zM1559 478h1v1h-1zM1594 478h1v1h-1zM1664 478h1v1h-1zM1699 478h1v1h-1zM1734 478h1v1h-1zM20 490h1v1h-1zM90 490h1v1h-1zM125 490h1v1h-1zM160 490h1v1h-1zM195 490h1v1h-1zM265 490h1v1h-1zM300 490h1v1h-1zM335 490h1v1h-1zM370 490h1v1h-1zM440 490h1v1h-1zM475 490h1v1h-1zM510 490h1v1h-1zM545 490h1v1h-1zM615 490h1v1h-1zM650 490h1v1h-1zM685 490h1v1h-1zM720 490h1v1h-1zM790 490h1v1h-1zM825 490h1v1h-1zM859 490h1v1h-1zM894 490h1v1h-1zM964 490h1v1h-1zM999 490h1v1h-1zM1034 490h1v1h-1zM1069 490h1v1h-1zM1139 490h1v1h-1zM1174 490h1v1h-1zM1209 490h1v1h-1zM1244 490h1v1h-1zM1314 490h1v1h-1zM1349 490h1v1h-1zM1384 490h1v1h-1zM1419 490h1v1h-1zM1489 490h1v1h-1zM1524 490h1v1h-1zM1559 490h1v1h-1zM1594 490h1v1h-1zM1664 490h1v1h-1zM1699 490h1v1h-1zM1734 490h1v1h-1zM20 502h1v1h-1zM90 502h1v1h-1zM125 502h1v1h-1zM160 502h1v1h-1zM195 502h1v1h-1zM265 502h1v1h-1zM300 502h1v1h-1zM335 502h1v1h-1zM370 502h1v1h-1zM440 502h1v1h-1zM475 502h1v1h-1zM510 502h1v1h-1zM545 502h1v1h-1zM615 502h1v1h-1zM650 502h1v1h-1zM685 502h1v1h-1zM720 502h1v1h-1zM790 502h1v1h-1zM825 502h1v1h-1zM859 502h1v1h-1zM894 502h1v1h-1zM964 502h1v1h-1zM999 502h1v1h-1zM1034 502h1v1h-1zM1069 502h1v1h-1zM1139 502h1v1h-1zM1174 502h1v1h-1zM1209 502h1v1h-1zM1244 502h1v1h-1zM1314 502h1v1h-1zM1349 502h1v1h-1zM1384 502h1v1h-1zM1419 502h1v1h-1zM1489 502h1v1h-1zM1524 502h1v1h-1zM1559 502h1v1h-1zM1594 502h1v1h-1zM1664 502h1v1h-1zM1699 502h1v1h-1zM1734 502h1v1h-1zM20 513h1v1h-1zM90 513h1v1h-1zM125 513h1v1h-1zM160 513h1v1h-1zM195 513h1v1h-1zM265 513h1v1h-1zM300 513h1v1h-1zM335 513h1v1h-1zM370 513h1v1h-1zM440 513h1v1h-1zM475 513h1v1h-1zM510 513h1v1h-1zM545 513h1v1h-1zM615 513h1v1h-1zM650 513h1v1h-1zM685 513h1v1h-1zM720 513h1v1h-1zM790 513h1v1h-1zM825 513h1v1h-1zM859 513h1v1h-1zM894 513h1v1h-1zM964 513h1v1h-1zM999 513h1v1h-1zM1034 513h1v1h-1zM1069 513h1v1h-1zM1139 513h1v1h-1zM1174 513h1v1h-1zM1209 513h1v1h-1zM1244 513h1v1h-1zM1314 513h1v1h-1zM1349 513h1v1h-1zM1384 513h1v1h-1zM1419 513h1v1h-1zM1489 513h1v1h-1zM1524 513h1v1h-1zM1559 513h1v1h-1zM1594 513h1v1h-1zM1664 513h1v1h-1zM1699 513h1v1h-1zM1734 513h1v1h-1zM20 526h1v1h-1zM90 526h1v1h-1zM125 526h1v1h-1zM160 526h1v1h-1zM195 526h1v1h-1zM265 526h1v1h-1zM300 526h1v1h-1zM335 526h1v1h-1zM370 526h1v1h-1zM440 526h1v1h-1zM475 526h1v1h-1zM510 526h1v1h-1zM545 526h1v1h-1zM615 526h1v1h-1zM650 526h1v1h-1zM685 526h1v1h-1zM720 526h1v1h-1zM790 526h1v1h-1zM825 526h1v1h-1zM859 526h1v1h-1zM894 526h1v1h-1zM964 526h1v1h-1zM999 526h1v1h-1zM1034 526h1v1h-1zM1069 526h1v1h-1zM1139 526h1v1h-1zM1174 526h1v1h-1zM1209 526h1v1h-1zM1244 526h1v1h-1zM1314 526h1v1h-1zM1349 526h1v1h-1zM1384 526h1v1h-1zM1419 526h1v1h-1zM1489 526h1v1h-1zM1524 526h1v1h-1zM1559 526h1v1h-1zM1594 526h1v1h-1zM1664 526h1v1h-1zM1699 526h1v1h-1zM1734 526h1v1h-1zM20 538h1v1h-1zM90 538h1v1h-1zM125 538h1v1h-1zM160 538h1v1h-1zM195 538h1v1h-1zM265 538h1v1h-1zM300 538h1v1h-1zM335 538h1v1h-1zM370 538h1v1h-1zM440 538h1v1h-1zM475 538h1v1h-1zM510 538h1v1h-1zM545 538h1v1h-1zM615 538h1v1h-1zM650 538h1v1h-1zM685 538h1v1h-1zM720 538h1v1h-1zM790 538h1v1h-1zM825 538h1v1h-1zM859 538h1v1h-1zM894 538h1v1h-1zM964 538h1v1h-1zM999 538h1v1h-1zM1034 538h1v1h-1zM1069 538h1v1h-1zM1139 538h1v1h-1zM1174 538h1v1h-1zM1209 538h1v1h-1zM1244 538h1v1h-1zM1314 538h1v1h-1zM1349 538h1v1h-1zM1384 538h1v1h-1zM1419 538h1v1h-1zM1489 538h1v1h-1zM1524 538h1v1h-1zM1559 538h1v1h-1zM1594 538h1v1h-1zM1664 538h1v1h-1zM1699 538h1v1h-1zM1734 538h1v1h-1zM20 550h1v1h-1zM90 550h1v1h-1zM125 550h1v1h-1zM160 550h1v1h-1zM195 550h1v1h-1zM265 550h1v1h-1zM300 550h1v1h-1zM335 550h1v1h-1zM370 550h1v1h-1zM440 550h1v1h-1zM475 550h1v1h-1zM510 550h1v1h-1zM545 550h1v1h-1zM615 550h1v1h-1zM650 550h1v1h-1zM685 550h1v1h-1zM720 550h1v1h-1zM790 550h1v1h-1zM825 550h1v1h-1zM859 550h1v1h-1zM894 550h1v1h-1zM964 550h1v1h-1zM999 550h1v1h-1zM1034 550h1v1h-1zM1069 550h1v1h-1zM1139 550h1v1h-1zM1174 550h1v1h-1zM1209 550h1v1h-1zM1244 550h1v1h-1zM1314 550h1v1h-1zM1349 550h1v1h-1zM1384 550h1v1h-1zM1419 550h1v1h-1zM1489 550h1v1h-1zM1524 550h1v1h-1zM1559 550h1v1h-1zM1594 550h1v1h-1zM1664 550h1v1h-1zM1699 550h1v1h-1zM1734 550h1v1h-1zM20 561h1v1h-1zM90 561h1v1h-1zM125 561h1v1h-1zM160 561h1v1h-1zM195 561h1v1h-1zM265 561h1v1h-1zM300 561h1v1h-1zM335 561h1v1h-1zM370 561h1v1h-1zM440 561h1v1h-1zM475 561h1v1h-1zM510 561h1v1h-1zM545 561h1v1h-1zM615 561h1v1h-1zM650 561h1v1h-1zM685 561h1v1h-1zM720 561h1v1h-1zM790 561h1v1h-1zM825 561h1v1h-1zM859 561h1v1h-1zM894 561h1v1h-1zM964 561h1v1h-1zM999 561h1v1h-1zM1034 561h1v1h-1zM1069 561h1v1h-1zM1139 561h1v1h-1zM1174 561h1v1h-1zM1209 561h1v1h-1zM1244 561h1v1h-1zM1314 561h1v1h-1zM1349 561h1v1h-1zM1384 561h1v1h-1zM1419 561h1v1h-1zM1489 561h1v1h-1zM1524 561h1v1h-1zM1559 561h1v1h-1zM1594 561h1v1h-1zM1664 561h1v1h-1zM1699 561h1v1h-1zM1734 561h1v1h-1zM20 572h1v1h-1zM90 572h1v1h-1zM125 572h1v1h-1zM160 572h1v1h-1zM195 572h1v1h-1zM265 572h1v1h-1zM300 572h1v1h-1zM335 572h1v1h-1zM370 572h1v1h-1zM440 572h1v1h-1zM475 572h1v1h-1zM510 572h1v1h-1zM545 572h1v1h-1zM615 572h1v1h-1zM650 572h1v1h-1zM685 572h1v1h-1zM720 572h1v1h-1zM790 572h1v1h-1zM825 572h1v1h-1zM859 572h1v1h-1zM894 572h1v1h-1zM964 572h1v1h-1zM999 572h1v1h-1zM1034 572h1v1h-1zM1069 572h1v1h-1zM1139 572h1v1h-1zM1174 572h1v1h-1zM1209 572h1v1h-1zM1244 572h1v1h-1zM1314 572h1v1h-1zM1349 572h1v1h-1zM1384 572h1v1h-1zM1419 572h1v1h-1zM1489 572h1v1h-1zM1524 572h1v1h-1zM1559 572h1v1h-1zM1594 572h1v1h-1zM1664 572h1v1h-1zM1699 572h1v1h-1zM1734 572h1v1h-1zM20 584h1v1h-1zM90 584h1v1h-1zM125 584h1v1h-1zM160 584h1v1h-1zM195 584h1v1h-1zM265 584h1v1h-1zM300 584h1v1h-1zM335 584h1v1h-1zM370 584h1v1h-1zM440 584h1v1h-1zM475 584h1v1h-1zM510 584h1v1h-1zM545 584h1v1h-1zM615 584h1v1h-1zM650 584h1v1h-1zM685 584h1v1h-1zM720 584h1v1h-1zM790 584h1v1h-1zM825 584h1v1h-1zM859 584h1v1h-1zM894 584h1v1h-1zM964 584h1v1h-1zM999 584h1v1h-1zM1034 584h1v1h-1zM1069 584h1v1h-1zM1139 584h1v1h-1zM1174 584h1v1h-1zM1209 584h1v1h-1zM1244 584h1v1h-1zM1314 584h1v1h-1zM1349 584h1v1h-1zM1384 584h1v1h-1zM1419 584h1v1h-1zM1489 584h1v1h-1zM1524 584h1v1h-1zM1559 584h1v1h-1zM1594 584h1v1h-1zM1664 584h1v1h-1zM1699 584h1v1h-1zM1734 584h1v1h-1zM20 596h1v1h-1zM90 596h1v1h-1zM125 596h1v1h-1zM160 596h1v1h-1zM195 596h1v1h-1zM265 596h1v1h-1zM300 596h1v1h-1zM335 596h1v1h-1zM370 596h1v1h-1zM440 596h1v1h-1zM475 596h1v1h-1zM510 596h1v1h-1zM545 596h1v1h-1zM615 596h1v1h-1zM650 596h1v1h-1zM685 596h1v1h-1zM720 596h1v1h-1zM790 596h1v1h-1zM825 596h1v1h-1zM859 596h1v1h-1zM894 596h1v1h-1zM964 596h1v1h-1zM999 596h1v1h-1zM1034 596h1v1h-1zM1069 596h1v1h-1zM1139 596h1v1h-1zM1174 596h1v1h-1zM1209 596h1v1h-1zM1244 596h1v1h-1zM1314 596h1v1h-1zM1349 596h1v1h-1zM1384 596h1v1h-1zM1419 596h1v1h-1zM1489 596h1v1h-1zM1524 596h1v1h-1zM1559 596h1v1h-1zM1594 596h1v1h-1zM1664 596h1v1h-1zM1699 596h1v1h-1zM1734 596h1v1h-1zM20 607h1v1h-1zM90 607h1v1h-1zM125 607h1v1h-1zM160 607h1v1h-1zM195 607h1v1h-1zM265 607h1v1h-1zM300 607h1v1h-1zM335 607h1v1h-1zM370 607h1v1h-1zM440 607h1v1h-1zM475 607h1v1h-1zM510 607h1v1h-1zM545 607h1v1h-1zM615 607h1v1h-1zM650 607h1v1h-1zM685 607h1v1h-1zM720 607h1v1h-1zM790 607h1v1h-1zM825 607h1v1h-1zM859 607h1v1h-1zM894 607h1v1h-1zM964 607h1v1h-1zM999 607h1v1h-1zM1034 607h1v1h-1zM1069 607h1v1h-1zM1139 607h1v1h-1zM1174 607h1v1h-1zM1209 607h1v1h-1zM1244 607h1v1h-1zM1314 607h1v1h-1zM1349 607h1v1h-1zM1384 607h1v1h-1zM1419 607h1v1h-1zM1489 607h1v1h-1zM1524 607h1v1h-1zM1559 607h1v1h-1zM1594 607h1v1h-1zM1664 607h1v1h-1zM1699 607h1v1h-1zM1734 607h1v1h-1zM20 618h1v1h-1zM90 618h1v1h-1zM125 618h1v1h-1zM160 618h1v1h-1zM195 618h1v1h-1zM265 618h1v1h-1zM300 618h1v1h-1zM335 618h1v1h-1zM370 618h1v1h-1zM440 618h1v1h-1zM475 618h1v1h-1zM510 618h1v1h-1zM545 618h1v1h-1zM615 618h1v1h-1zM650 618h1v1h-1zM685 618h1v1h-1zM720 618h1v1h-1zM790 618h1v1h-1zM825 618h1v1h-1zM859 618h1v1h-1zM894 618h1v1h-1zM964 618h1v1h-1zM999 618h1v1h-1zM1034 618h1v1h-1zM1069 618h1v1h-1zM1139 618h1v1h-1zM1174 618h1v1h-1zM1209 618h1v1h-1zM1244 618h1v1h-1zM1314 618h1v1h-1zM1349 618h1v1h-1zM1384 618h1v1h-1zM1419 618h1v1h-1zM1489 618h1v1h-1zM1524 618h1v1h-1zM1559 618h1v1h-1zM1594 618h1v1h-1zM1664 618h1v1h-1zM1699 618h1v1h-1zM1734 618h1v1h-1zM20 630h1v1h-1zM90 630h1v1h-1zM125 630h1v1h-1zM160 630h1v1h-1zM195 630h1v1h-1zM265 630h1v1h-1zM300 630h1v1h-1zM335 630h1v1h-1zM370 630h1v1h-1zM440 630h1v1h-1zM475 630h1v1h-1zM510 630h1v1h-1zM545 630h1v1h-1zM615 630h1v1h-1zM650 630h1v1h-1zM685 630h1v1h-1zM720 630h1v1h-1zM790 630h1v1h-1zM825 630h1v1h-1zM859 630h1v1h-1zM894 630h1v1h-1zM964 630h1v1h-1zM999 630h1v1h-1zM1034 630h1v1h-1zM1069 630h1v1h-1zM1139 630h1v1h-1zM1174 630h1v1h-1zM1209 630h1v1h-1zM1244 630h1v1h-1zM1314 630h1v1h-1zM1349 630h1v1h-1zM1384 630h1v1h-1zM1419 630h1v1h-1zM1489 630h1v1h-1zM1524 630h1v1h-1zM1559 630h1v1h-1zM1594 630h1v1h-1zM1664 630h1v1h-1zM1699 630h1v1h-1zM1734 630h1v1h-1zM20 644h1v1h-1zM90 644h1v1h-1zM125 644h1v1h-1zM160 644h1v1h-1zM195 644h1v1h-1zM265 644h1v1h-1zM300 644h1v1h-1zM335 644h1v1h-1zM370 644h1v1h-1zM440 644h1v1h-1zM475 644h1v1h-1zM510 644h1v1h-1zM545 644h1v1h-1zM615 644h1v1h-1zM650 644h1v1h-1zM685 644h1v1h-1zM720 644h1v1h-1zM790 644h1v1h-1zM825 644h1v1h-1zM859 644h1v1h-1zM894 644h1v1h-1zM964 644h1v1h-1zM999 644h1v1h-1zM1034 644h1v1h-1zM1069 644h1v1h-1zM1139 644h1v1h-1zM1174 644h1v1h-1zM1209 644h1v1h-1zM1244 644h1v1h-1zM1314 644h1v1h-1zM1349 644h1v1h-1zM1384 644h1v1h-1zM1419 644h1v1h-1zM1489 644h1v1h-1zM1524 644h1v1h-1zM1559 644h1v1h-1zM1594 644h1v1h-1zM1664 644h1v1h-1zM1699 644h1v1h-1zM1734 644h1v1h-1zM20 655h1v1h-1zM90 655h1v1h-1zM125 655h1v1h-1zM160 655h1v1h-1zM195 655h1v1h-1zM265 655h1v1h-1zM300 655h1v1h-1zM335 655h1v1h-1zM370 655h1v1h-1zM440 655h1v1h-1zM475 655h1v1h-1zM510 655h1v1h-1zM545 655h1v1h-1zM615 655h1v1h-1zM650 655h1v1h-1zM685 655h1v1h-1zM720 655h1v1h-1zM790 655h1v1h-1zM825 655h1v1h-1zM859 655h1v1h-1zM894 655h1v1h-1zM964 655h1v1h-1zM999 655h1v1h-1zM1034 655h1v1h-1zM1069 655h1v1h-1zM1139 655h1v1h-1zM1174 655h1v1h-1zM1209 655h1v1h-1zM1244 655h1v1h-1zM1314 655h1v1h-1zM1349 655h1v1h-1zM1384 655h1v1h-1zM1419 655h1v1h-1zM1489 655h1v1h-1zM1524 655h1v1h-1zM1559 655h1v1h-1zM1594 655h1v1h-1zM1664 655h1v1h-1zM1699 655h1v1h-1zM1734 655h1v1h-1zM20 666h1v1h-1zM90 666h1v1h-1zM125 666h1v1h-1zM160 666h1v1h-1zM195 666h1v1h-1zM265 666h1v1h-1zM300 666h1v1h-1zM335 666h1v1h-1zM370 666h1v1h-1zM440 666h1v1h-1zM475 666h1v1h-1zM510 666h1v1h-1zM545 666h1v1h-1zM615 666h1v1h-1zM650 666h1v1h-1zM685 666h1v1h-1zM720 666h1v1h-1zM790 666h1v1h-1zM825 666h1v1h-1zM859 666h1v1h-1zM894 666h1v1h-1zM964 666h1v1h-1zM999 666h1v1h-1zM1034 666h1v1h-1zM1069 666h1v1h-1zM1139 666h1v1h-1zM1174 666h1v1h-1zM1209 666h1v1h-1zM1244 666h1v1h-1zM1314 666h1v1h-1zM1349 666h1v1h-1zM1384 666h1v1h-1zM1419 666h1v1h-1zM1489 666h1v1h-1zM1524 666h1v1h-1zM1559 666h1v1h-1zM1594 666h1v1h-1zM1664 666h1v1h-1zM1699 666h1v1h-1zM1734 666h1v1h-1zM20 678h1v1h-1zM90 678h1v1h-1zM125 678h1v1h-1zM160 678h1v1h-1zM195 678h1v1h-1zM265 678h1v1h-1zM300 678h1v1h-1zM335 678h1v1h-1zM370 678h1v1h-1zM440 678h1v1h-1zM475 678h1v1h-1zM510 678h1v1h-1zM545 678h1v1h-1zM615 678h1v1h-1zM650 678h1v1h-1zM685 678h1v1h-1zM720 678h1v1h-1zM790 678h1v1h-1zM825 678h1v1h-1zM859 678h1v1h-1zM894 678h1v1h-1zM964 678h1v1h-1zM999 678h1v1h-1zM1034 678h1v1h-1zM1069 678h1v1h-1zM1139 678h1v1h-1zM1174 678h1v1h-1zM1209 678h1v1h-1zM1244 678h1v1h-1zM1314 678h1v1h-1zM1349 678h1v1h-1zM1384 678h1v1h-1zM1419 678h1v1h-1zM1489 678h1v1h-1zM1524 678h1v1h-1zM1559 678h1v1h-1zM1594 678h1v1h-1zM1664 678h1v1h-1zM1699 678h1v1h-1zM1734 678h1v1h-1zM20 690h1v1h-1zM90 690h1v1h-1zM125 690h1v1h-1zM160 690h1v1h-1zM195 690h1v1h-1zM265 690h1v1h-1zM300 690h1v1h-1zM335 690h1v1h-1zM370 690h1v1h-1zM440 690h1v1h-1zM475 690h1v1h-1zM510 690h1v1h-1zM545 690h1v1h-1zM615 690h1v1h-1zM650 690h1v1h-1zM685 690h1v1h-1zM720 690h1v1h-1zM790 690h1v1h-1zM825 690h1v1h-1zM859 690h1v1h-1zM894 690h1v1h-1zM964 690h1v1h-1zM999 690h1v1h-1zM1034 690h1v1h-1zM1069 690h1v1h-1zM1139 690h1v1h-1zM1174 690h1v1h-1zM1209 690h1v1h-1zM1244 690h1v1h-1zM1314 690h1v1h-1zM1349 690h1v1h-1zM1384 690h1v1h-1zM1419 690h1v1h-1zM1489 690h1v1h-1zM1524 690h1v1h-1zM1559 690h1v1h-1zM1594 690h1v1h-1zM1664 690h1v1h-1zM1699 690h1v1h-1zM1734 690h1v1h-1zM20 701h1v1h-1zM90 701h1v1h-1zM125 701h1v1h-1zM160 701h1v1h-1zM195 701h1v1h-1zM265 701h1v1h-1zM300 701h1v1h-1zM335 701h1v1h-1zM370 701h1v1h-1zM440 701h1v1h-1zM475 701h1v1h-1zM510 701h1v1h-1zM545 701h1v1h-1zM615 701h1v1h-1zM650 701h1v1h-1zM685 701h1v1h-1zM720 701h1v1h-1zM790 701h1v1h-1zM825 701h1v1h-1zM859 701h1v1h-1zM894 701h1v1h-1zM964 701h1v1h-1zM999 701h1v1h-1zM1034 701h1v1h-1zM1069 701h1v1h-1zM1139 701h1v1h-1zM1174 701h1v1h-1zM1209 701h1v1h-1zM1244 701h1v1h-1zM1314 701h1v1h-1zM1349 701h1v1h-1zM1384 701h1v1h-1zM1419 701h1v1h-1zM1489 701h1v1h-1zM1524 701h1v1h-1zM1559 701h1v1h-1zM1594 701h1v1h-1zM1664 701h1v1h-1zM1699 701h1v1h-1zM1734 701h1v1h-1zM20 712h1v1h-1zM90 712h1v1h-1zM125 712h1v1h-1zM160 712h1v1h-1zM195 712h1v1h-1zM265 712h1v1h-1zM300 712h1v1h-1zM335 712h1v1h-1zM370 712h1v1h-1zM440 712h1v1h-1zM475 712h1v1h-1zM510 712h1v1h-1zM545 712h1v1h-1zM615 712h1v1h-1zM650 712h1v1h-1zM685 712h1v1h-1zM720 712h1v1h-1zM790 712h1v1h-1zM825 712h1v1h-1zM859 712h1v1h-1zM894 712h1v1h-1zM964 712h1v1h-1zM999 712h1v1h-1zM1034 712h1v1h-1zM1069 712h1v1h-1zM1139 712h1v1h-1zM1174 712h1v1h-1zM1209 712h1v1h-1zM1244 712h1v1h-1zM1314 712h1v1h-1zM1349 712h1v1h-1zM1384 712h1v1h-1zM1419 712h1v1h-1zM1489 712h1v1h-1zM1524 712h1v1h-1zM1559 712h1v1h-1zM1594 712h1v1h-1zM1664 712h1v1h-1zM1699 712h1v1h-1zM1734 712h1v1h-1zM20 724h1v1h-1zM90 724h1v1h-1zM125 724h1v1h-1zM160 724h1v1h-1zM195 724h1v1h-1zM265 724h1v1h-1zM300 724h1v1h-1zM335 724h1v1h-1zM370 724h1v1h-1zM440 724h1v1h-1zM475 724h1v1h-1zM510 724h1v1h-1zM545 724h1v1h-1zM615 724h1v1h-1zM650 724h1v1h-1zM685 724h1v1h-1zM720 724h1v1h-1zM790 724h1v1h-1zM825 724h1v1h-1zM859 724h1v1h-1zM894 724h1v1h-1zM964 724h1v1h-1zM999 724h1v1h-1zM1034 724h1v1h-1zM1069 724h1v1h-1zM1139 724h1v1h-1zM1174 724h1v1h-1zM1209 724h1v1h-1zM1244 724h1v1h-1zM1314 724h1v1h-1zM1349 724h1v1h-1zM1384 724h1v1h-1zM1419 724h1v1h-1zM1489 724h1v1h-1zM1524 724h1v1h-1zM1559 724h1v1h-1zM1594 724h1v1h-1zM1664 724h1v1h-1zM1699 724h1v1h-1zM1734 724h1v1h-1zM20 736h1v1h-1zM90 736h1v1h-1zM125 736h1v1h-1zM160 736h1v1h-1zM195 736h1v1h-1zM265 736h1v1h-1zM300 736h1v1h-1zM335 736h1v1h-1zM370 736h1v1h-1zM440 736h1v1h-1zM475 736h1v1h-1zM510 736h1v1h-1zM545 736h1v1h-1zM615 736h1v1h-1zM650 736h1v1h-1zM685 736h1v1h-1zM720 736h1v1h-1zM790 736h1v1h-1zM825 736h1v1h-1zM859 736h1v1h-1zM894 736h1v1h-1zM964 736h1v1h-1zM999 736h1v1h-1zM1034 736h1v1h-1zM1069 736h1v1h-1zM1139 736h1v1h-1zM1174 736h1v1h-1zM1209 736h1v1h-1zM1244 736h1v1h-1zM1314 736h1v1h-1zM1349 736h1v1h-1zM1384 736h1v1h-1zM1419 736h1v1h-1zM1489 736h1v1h-1zM1524 736h1v1h-1zM1559 736h1v1h-1zM1594 736h1v1h-1zM1664 736h1v1h-1zM1699 736h1v1h-1zM1734 736h1v1h-1zM20 760h1v1h-1zM90 760h1v1h-1zM125 760h1v1h-1zM160 760h1v1h-1zM195 760h1v1h-1zM265 760h1v1h-1zM300 760h1v1h-1zM335 760h1v1h-1zM370 760h1v1h-1zM440 760h1v1h-1zM475 760h1v1h-1zM510 760h1v1h-1zM545 760h1v1h-1zM615 760h1v1h-1zM650 760h1v1h-1zM685 760h1v1h-1zM720 760h1v1h-1zM790 760h1v1h-1zM825 760h1v1h-1zM859 760h1v1h-1zM894 760h1v1h-1zM964 760h1v1h-1zM999 760h1v1h-1zM1034 760h1v1h-1zM1069 760h1v1h-1zM1139 760h1v1h-1zM1174 760h1v1h-1zM1209 760h1v1h-1zM1244 760h1v1h-1zM1314 760h1v1h-1zM1349 760h1v1h-1zM1384 760h1v1h-1zM1419 760h1v1h-1zM1489 760h1v1h-1zM1524 760h1v1h-1zM1559 760h1v1h-1zM1594 760h1v1h-1zM1664 760h1v1h-1zM1699 760h1v1h-1zM1734 760h1v1h-1zM20 772h1v1h-1zM90 772h1v1h-1zM125 772h1v1h-1zM160 772h1v1h-1zM195 772h1v1h-1zM265 772h1v1h-1zM300 772h1v1h-1zM335 772h1v1h-1zM370 772h1v1h-1zM440 772h1v1h-1zM475 772h1v1h-1zM510 772h1v1h-1zM545 772h1v1h-1zM615 772h1v1h-1zM650 772h1v1h-1zM685 772h1v1h-1zM720 772h1v1h-1zM790 772h1v1h-1zM825 772h1v1h-1zM859 772h1v1h-1zM894 772h1v1h-1zM964 772h1v1h-1zM999 772h1v1h-1zM1034 772h1v1h-1zM1069 772h1v1h-1zM1139 772h1v1h-1zM1174 772h1v1h-1zM1209 772h1v1h-1zM1244 772h1v1h-1zM1314 772h1v1h-1zM1349 772h1v1h-1zM1384 772h1v1h-1zM1419 772h1v1h-1zM1489 772h1v1h-1zM1524 772h1v1h-1zM1559 772h1v1h-1zM1594 772h1v1h-1zM1664 772h1v1h-1zM1699 772h1v1h-1zM1734 772h1v1h-1zM20 784h1v1h-1zM90 784h1v1h-1zM125 784h1v1h-1zM160 784h1v1h-1zM195 784h1v1h-1zM265 784h1v1h-1zM300 784h1v1h-1zM335 784h1v1h-1zM370 784h1v1h-1zM440 784h1v1h-1zM475 784h1v1h-1zM510 784h1v1h-1zM545 784h1v1h-1zM615 784h1v1h-1zM650 784h1v1h-1zM685 784h1v1h-1zM720 784h1v1h-1zM790 784h1v1h-1zM825 784h1v1h-1zM859 784h1v1h-1zM894 784h1v1h-1zM964 784h1v1h-1zM999 784h1v1h-1zM1034 784h1v1h-1zM1069 784h1v1h-1zM1139 784h1v1h-1zM1174 784h1v1h-1zM1209 784h1v1h-1zM1244 784h1v1h-1zM1314 784h1v1h-1zM1349 784h1v1h-1zM1384 784h1v1h-1zM1419 784h1v1h-1zM1489 784h1v1h-1zM1524 784h1v1h-1zM1559 784h1v1h-1zM1594 784h1v1h-1zM1664 784h1v1h-1zM1699 784h1v1h-1zM1734 784h1v1h-1zM20 795h1v1h-1zM90 795h1v1h-1zM125 795h1v1h-1zM160 795h1v1h-1zM195 795h1v1h-1zM265 795h1v1h-1zM300 795h1v1h-1zM335 795h1v1h-1zM370 795h1v1h-1zM440 795h1v1h-1zM475 795h1v1h-1zM510 795h1v1h-1zM545 795h1v1h-1zM615 795h1v1h-1zM650 795h1v1h-1zM685 795h1v1h-1zM720 795h1v1h-1zM790 795h1v1h-1zM825 795h1v1h-1zM859 795h1v1h-1zM894 795h1v1h-1zM964 795h1v1h-1zM999 795h1v1h-1zM1034 795h1v1h-1zM1069 795h1v1h-1zM1139 795h1v1h-1zM1174 795h1v1h-1zM1209 795h1v1h-1zM1244 795h1v1h-1zM1314 795h1v1h-1zM1349 795h1v1h-1zM1384 795h1v1h-1zM1419 795h1v1h-1zM1489 795h1v1h-1zM1524 795h1v1h-1zM1559 795h1v1h-1zM1594 795h1v1h-1zM1664 795h1v1h-1zM1699 795h1v1h-1zM1734 795h1v1h-1zM20 806h1v1h-1zM90 806h1v1h-1zM125 806h1v1h-1zM160 806h1v1h-1zM195 806h1v1h-1zM265 806h1v1h-1zM300 806h1v1h-1zM335 806h1v1h-1zM370 806h1v1h-1zM440 806h1v1h-1zM475 806h1v1h-1zM510 806h1v1h-1zM545 806h1v1h-1zM615 806h1v1h-1zM650 806h1v1h-1zM685 806h1v1h-1zM720 806h1v1h-1zM790 806h1v1h-1zM825 806h1v1h-1zM859 806h1v1h-1zM894 806h1v1h-1zM964 806h1v1h-1zM999 806h1v1h-1zM1034 806h1v1h-1zM1069 806h1v1h-1zM1139 806h1v1h-1zM1174 806h1v1h-1zM1209 806h1v1h-1zM1244 806h1v1h-1zM1314 806h1v1h-1zM1349 806h1v1h-1zM1384 806h1v1h-1zM1419 806h1v1h-1zM1489 806h1v1h-1zM1524 806h1v1h-1zM1559 806h1v1h-1zM1594 806h1v1h-1zM1664 806h1v1h-1zM1699 806h1v1h-1zM1734 806h1v1h-1zM20 818h1v1h-1zM90 818h1v1h-1zM125 818h1v1h-1zM160 818h1v1h-1zM195 818h1v1h-1zM265 818h1v1h-1zM300 818h1v1h-1zM335 818h1v1h-1zM370 818h1v1h-1zM440 818h1v1h-1zM475 818h1v1h-1zM510 818h1v1h-1zM545 818h1v1h-1zM615 818h1v1h-1zM650 818h1v1h-1zM685 818h1v1h-1zM720 818h1v1h-1zM790 818h1v1h-1zM825 818h1v1h-1zM859 818h1v1h-1zM894 818h1v1h-1zM964 818h1v1h-1zM999 818h1v1h-1zM1034 818h1v1h-1zM1069 818h1v1h-1zM1139 818h1v1h-1zM1174 818h1v1h-1zM1209 818h1v1h-1zM1244 818h1v1h-1zM1314 818h1v1h-1zM1349 818h1v1h-1zM1384 818h1v1h-1zM1419 818h1v1h-1zM1489 818h1v1h-1zM1524 818h1v1h-1zM1559 818h1v1h-1zM1594 818h1v1h-1zM1664 818h1v1h-1zM1699 818h1v1h-1zM1734 818h1v1h-1zM20 830h1v1h-1zM90 830h1v1h-1zM125 830h1v1h-1zM160 830h1v1h-1zM195 830h1v1h-1zM265 830h1v1h-1zM300 830h1v1h-1zM335 830h1v1h-1zM370 830h1v1h-1zM440 830h1v1h-1zM475 830h1v1h-1zM510 830h1v1h-1zM545 830h1v1h-1zM615 830h1v1h-1zM650 830h1v1h-1zM685 830h1v1h-1zM720 830h1v1h-1zM790 830h1v1h-1zM825 830h1v1h-1zM859 830h1v1h-1zM894 830h1v1h-1zM964 830h1v1h-1zM999 830h1v1h-1zM1034 830h1v1h-1zM1069 830h1v1h-1zM1139 830h1v1h-1zM1174 830h1v1h-1zM1209 830h1v1h-1zM1244 830h1v1h-1zM1314 830h1v1h-1zM1349 830h1v1h-1zM1384 830h1v1h-1zM1419 830h1v1h-1zM1489 830h1v1h-1zM1524 830h1v1h-1zM1559 830h1v1h-1zM1594 830h1v1h-1zM1664 830h1v1h-1zM1699 830h1v1h-1zM1734 830h1v1h-1zM20 841h1v1h-1zM90 841h1v1h-1zM125 841h1v1h-1zM160 841h1v1h-1zM195 841h1v1h-1zM265 841h1v1h-1zM300 841h1v1h-1zM335 841h1v1h-1zM370 841h1v1h-1zM440 841h1v1h-1zM475 841h1v1h-1zM510 841h1v1h-1zM545 841h1v1h-1zM615 841h1v1h-1zM650 841h1v1h-1zM685 841h1v1h-1zM720 841h1v1h-1zM790 841h1v1h-1zM825 841h1v1h-1zM859 841h1v1h-1zM894 841h1v1h-1zM964 841h1v1h-1zM999 841h1v1h-1zM1034 841h1v1h-1zM1069 841h1v1h-1zM1139 841h1v1h-1zM1174 841h1v1h-1zM1209 841h1v1h-1zM1244 841h1v1h-1zM1314 841h1v1h-1zM1349 841h1v1h-1zM1384 841h1v1h-1zM1419 841h1v1h-1zM1489 841h1v1h-1zM1524 841h1v1h-1zM1559 841h1v1h-1zM1594 841h1v1h-1zM1664 841h1v1h-1zM1699 841h1v1h-1zM1734 841h1v1h-1zM20 852h1v1h-1zM90 852h1v1h-1zM125 852h1v1h-1zM160 852h1v1h-1zM195 852h1v1h-1zM265 852h1v1h-1zM300 852h1v1h-1zM335 852h1v1h-1zM370 852h1v1h-1zM440 852h1v1h-1zM475 852h1v1h-1zM510 852h1v1h-1zM545 852h1v1h-1zM615 852h1v1h-1zM650 852h1v1h-1zM685 852h1v1h-1zM720 852h1v1h-1zM790 852h1v1h-1zM825 852h1v1h-1zM859 852h1v1h-1zM894 852h1v1h-1zM964 852h1v1h-1zM999 852h1v1h-1zM1034 852h1v1h-1zM1069 852h1v1h-1zM1139 852h1v1h-1zM1174 852h1v1h-1zM1209 852h1v1h-1zM1244 852h1v1h-1zM1314 852h1v1h-1zM1349 852h1v1h-1zM1384 852h1v1h-1zM1419 852h1v1h-1zM1489 852h1v1h-1zM1524 852h1v1h-1zM1559 852h1v1h-1zM1594 852h1v1h-1zM1664 852h1v1h-1zM1699 852h1v1h-1zM1734 852h1v1h-1zM20 864h1v1h-1zM90 864h1v1h-1zM125 864h1v1h-1zM160 864h1v1h-1zM195 864h1v1h-1zM265 864h1v1h-1zM300 864h1v1h-1zM335 864h1v1h-1zM370 864h1v1h-1zM440 864h1v1h-1zM475 864h1v1h-1zM510 864h1v1h-1zM545 864h1v1h-1zM615 864h1v1h-1zM650 864h1v1h-1zM685 864h1v1h-1zM720 864h1v1h-1zM790 864h1v1h-1zM825 864h1v1h-1zM859 864h1v1h-1zM894 864h1v1h-1zM964 864h1v1h-1zM999 864h1v1h-1zM1034 864h1v1h-1zM1069 864h1v1h-1zM1139 864h1v1h-1zM1174 864h1v1h-1zM1209 864h1v1h-1zM1244 864h1v1h-1zM1314 864h1v1h-1zM1349 864h1v1h-1zM1384 864h1v1h-1zM1419 864h1v1h-1zM1489 864h1v1h-1zM1524 864h1v1h-1zM1559 864h1v1h-1zM1594 864h1v1h-1zM1664 864h1v1h-1zM1699 864h1v1h-1zM1734 864h1v1h-1zM20 876h1v1h-1zM90 876h1v1h-1zM125 876h1v1h-1zM160 876h1v1h-1zM195 876h1v1h-1zM265 876h1v1h-1zM300 876h1v1h-1zM335 876h1v1h-1zM370 876h1v1h-1zM440 876h1v1h-1zM475 876h1v1h-1zM510 876h1v1h-1zM545 876h1v1h-1zM615 876h1v1h-1zM650 876h1v1h-1zM685 876h1v1h-1zM720 876h1v1h-1zM790 876h1v1h-1zM825 876h1v1h-1zM859 876h1v1h-1zM894 876h1v1h-1zM964 876h1v1h-1zM999 876h1v1h-1zM1034 876h1v1h-1zM1069 876h1v1h-1zM1139 876h1v1h-1zM1174 876h1v1h-1zM1209 876h1v1h-1zM1244 876h1v1h-1zM1314 876h1v1h-1zM1349 876h1v1h-1zM1384 876h1v1h-1zM1419 876h1v1h-1zM1489 876h1v1h-1zM1524 876h1v1h-1zM1559 876h1v1h-1zM1594 876h1v1h-1zM1664 876h1v1h-1zM1699 876h1v1h-1zM1734 876h1v1h-1zM20 888h1v1h-1zM90 888h1v1h-1zM125 888h1v1h-1zM160 888h1v1h-1zM195 888h1v1h-1zM265 888h1v1h-1zM300 888h1v1h-1zM335 888h1v1h-1zM370 888h1v1h-1zM440 888h1v1h-1zM475 888h1v1h-1zM510 888h1v1h-1zM545 888h1v1h-1zM615 888h1v1h-1zM650 888h1v1h-1zM685 888h1v1h-1zM720 888h1v1h-1zM790 888h1v1h-1zM825 888h1v1h-1zM859 888h1v1h-1zM894 888h1v1h-1zM964 888h1v1h-1zM999 888h1v1h-1zM1034 888h1v1h-1zM1069 888h1v1h-1zM1139 888h1v1h-1zM1174 888h1v1h-1zM1209 888h1v1h-1zM1244 888h1v1h-1zM1314 888h1v1h-1zM1349 888h1v1h-1zM1384 888h1v1h-1zM1419 888h1v1h-1zM1489 888h1v1h-1zM1524 888h1v1h-1zM1559 888h1v1h-1zM1594 888h1v1h-1zM1664 888h1v1h-1zM1699 888h1v1h-1zM1734 888h1v1h-1zM20 900h1v1h-1zM90 900h1v1h-1zM125 900h1v1h-1zM160 900h1v1h-1zM195 900h1v1h-1zM265 900h1v1h-1zM300 900h1v1h-1zM335 900h1v1h-1zM370 900h1v1h-1zM440 900h1v1h-1zM475 900h1v1h-1zM510 900h1v1h-1zM545 900h1v1h-1zM615 900h1v1h-1zM650 900h1v1h-1zM685 900h1v1h-1zM720 900h1v1h-1zM790 900h1v1h-1zM825 900h1v1h-1zM859 900h1v1h-1zM894 900h1v1h-1zM964 900h1v1h-1zM999 900h1v1h-1zM1034 900h1v1h-1zM1069 900h1v1h-1zM1139 900h1v1h-1zM1174 900h1v1h-1zM1209 900h1v1h-1zM1244 900h1v1h-1zM1314 900h1v1h-1zM1349 900h1v1h-1zM1384 900h1v1h-1zM1419 900h1v1h-1zM1489 900h1v1h-1zM1524 900h1v1h-1zM1559 900h1v1h-1zM1594 900h1v1h-1zM1664 900h1v1h-1zM1699 900h1v1h-1zM1734 900h1v1h-1zM20 911h1v1h-1zM90 911h1v1h-1zM125 911h1v1h-1zM160 911h1v1h-1zM195 911h1v1h-1zM265 911h1v1h-1zM300 911h1v1h-1zM335 911h1v1h-1zM370 911h1v1h-1zM440 911h1v1h-1zM475 911h1v1h-1zM510 911h1v1h-1zM545 911h1v1h-1zM615 911h1v1h-1zM650 911h1v1h-1zM685 911h1v1h-1zM720 911h1v1h-1zM790 911h1v1h-1zM825 911h1v1h-1zM859 911h1v1h-1zM894 911h1v1h-1zM964 911h1v1h-1zM999 911h1v1h-1zM1034 911h1v1h-1zM1069 911h1v1h-1zM1139 911h1v1h-1zM1174 911h1v1h-1zM1209 911h1v1h-1zM1244 911h1v1h-1zM1314 911h1v1h-1zM1349 911h1v1h-1zM1384 911h1v1h-1zM1419 911h1v1h-1zM1489 911h1v1h-1zM1524 911h1v1h-1zM1559 911h1v1h-1zM1594 911h1v1h-1zM1664 911h1v1h-1zM1699 911h1v1h-1zM1734 911h1v1h-1zM20 922h1v1h-1zM90 922h1v1h-1zM125 922h1v1h-1zM160 922h1v1h-1zM195 922h1v1h-1zM265 922h1v1h-1zM300 922h1v1h-1zM335 922h1v1h-1zM370 922h1v1h-1zM440 922h1v1h-1zM475 922h1v1h-1zM510 922h1v1h-1zM545 922h1v1h-1zM615 922h1v1h-1zM650 922h1v1h-1zM685 922h1v1h-1zM720 922h1v1h-1zM790 922h1v1h-1zM825 922h1v1h-1zM859 922h1v1h-1zM894 922h1v1h-1zM964 922h1v1h-1zM999 922h1v1h-1zM1034 922h1v1h-1zM1069 922h1v1h-1zM1139 922h1v1h-1zM1174 922h1v1h-1zM1209 922h1v1h-1zM1244 922h1v1h-1zM1314 922h1v1h-1zM1349 922h1v1h-1zM1384 922h1v1h-1zM1419 922h1v1h-1zM1489 922h1v1h-1zM1524 922h1v1h-1zM1559 922h1v1h-1zM1594 922h1v1h-1zM1664 922h1v1h-1zM1699 922h1v1h-1zM1734 922h1v1h-1zM20 934h1v1h-1zM90 934h1v1h-1zM125 934h1v1h-1zM160 934h1v1h-1zM195 934h1v1h-1zM265 934h1v1h-1zM300 934h1v1h-1zM335 934h1v1h-1zM370 934h1v1h-1zM440 934h1v1h-1zM475 934h1v1h-1zM510 934h1v1h-1zM545 934h1v1h-1zM615 934h1v1h-1zM650 934h1v1h-1zM685 934h1v1h-1zM720 934h1v1h-1zM790 934h1v1h-1zM825 934h1v1h-1zM859 934h1v1h-1zM894 934h1v1h-1zM964 934h1v1h-1zM999 934h1v1h-1zM1034 934h1v1h-1zM1069 934h1v1h-1zM1139 934h1v1h-1zM1174 934h1v1h-1zM1209 934h1v1h-1zM1244 934h1v1h-1zM1314 934h1v1h-1zM1349 934h1v1h-1zM1384 934h1v1h-1zM1419 934h1v1h-1zM1489 934h1v1h-1zM1524 934h1v1h-1zM1559 934h1v1h-1zM1594 934h1v1h-1zM1664 934h1v1h-1zM1699 934h1v1h-1zM1734 934h1v1h-1zM20 946h1v1h-1zM90 946h1v1h-1zM125 946h1v1h-1zM160 946h1v1h-1zM195 946h1v1h-1zM265 946h1v1h-1zM300 946h1v1h-1zM335 946h1v1h-1zM370 946h1v1h-1zM440 946h1v1h-1zM475 946h1v1h-1zM510 946h1v1h-1zM545 946h1v1h-1zM615 946h1v1h-1zM650 946h1v1h-1zM685 946h1v1h-1zM720 946h1v1h-1zM790 946h1v1h-1zM825 946h1v1h-1zM859 946h1v1h-1zM894 946h1v1h-1zM964 946h1v1h-1zM999 946h1v1h-1zM1034 946h1v1h-1zM1069 946h1v1h-1zM1139 946h1v1h-1zM1174 946h1v1h-1zM1209 946h1v1h-1zM1244 946h1v1h-1zM1314 946h1v1h-1zM1349 946h1v1h-1zM1384 946h1v1h-1zM1419 946h1v1h-1zM1489 946h1v1h-1zM1524 946h1v1h-1zM1559 946h1v1h-1zM1594 946h1v1h-1zM1664 946h1v1h-1zM1699 946h1v1h-1zM1734 946h1v1h-1zM20 957h1v1h-1zM90 957h1v1h-1zM125 957h1v1h-1zM160 957h1v1h-1zM195 957h1v1h-1zM265 957h1v1h-1zM300 957h1v1h-1zM335 957h1v1h-1zM370 957h1v1h-1zM440 957h1v1h-1zM475 957h1v1h-1zM510 957h1v1h-1zM545 957h1v1h-1zM615 957h1v1h-1zM650 957h1v1h-1zM685 957h1v1h-1zM720 957h1v1h-1zM790 957h1v1h-1zM825 957h1v1h-1zM859 957h1v1h-1zM894 957h1v1h-1zM964 957h1v1h-1zM999 957h1v1h-1zM1034 957h1v1h-1zM1069 957h1v1h-1zM1139 957h1v1h-1zM1174 957h1v1h-1zM1209 957h1v1h-1zM1244 957h1v1h-1zM1314 957h1v1h-1zM1349 957h1v1h-1zM1384 957h1v1h-1zM1419 957h1v1h-1zM1489 957h1v1h-1zM1524 957h1v1h-1zM1559 957h1v1h-1zM1594 957h1v1h-1zM1664 957h1v1h-1zM1699 957h1v1h-1zM1734 957h1v1h-1zM20 970h1v1h-1zM90 970h1v1h-1zM125 970h1v1h-1zM160 970h1v1h-1zM195 970h1v1h-1zM265 970h1v1h-1zM300 970h1v1h-1zM335 970h1v1h-1zM370 970h1v1h-1zM440 970h1v1h-1zM475 970h1v1h-1zM510 970h1v1h-1zM545 970h1v1h-1zM615 970h1v1h-1zM650 970h1v1h-1zM685 970h1v1h-1zM720 970h1v1h-1zM790 970h1v1h-1zM825 970h1v1h-1zM859 970h1v1h-1zM894 970h1v1h-1zM964 970h1v1h-1zM999 970h1v1h-1zM1034 970h1v1h-1zM1069 970h1v1h-1zM1139 970h1v1h-1zM1174 970h1v1h-1zM1209 970h1v1h-1zM1244 970h1v1h-1zM1314 970h1v1h-1zM1349 970h1v1h-1zM1384 970h1v1h-1zM1419 970h1v1h-1zM1489 970h1v1h-1zM1524 970h1v1h-1zM1559 970h1v1h-1zM1594 970h1v1h-1zM1664 970h1v1h-1zM1699 970h1v1h-1zM1734 970h1v1h-1zM20 981h1v1h-1zM90 981h1v1h-1zM125 981h1v1h-1zM160 981h1v1h-1zM195 981h1v1h-1zM265 981h1v1h-1zM300 981h1v1h-1zM335 981h1v1h-1zM370 981h1v1h-1zM440 981h1v1h-1zM475 981h1v1h-1zM510 981h1v1h-1zM545 981h1v1h-1zM615 981h1v1h-1zM650 981h1v1h-1zM685 981h1v1h-1zM720 981h1v1h-1zM790 981h1v1h-1zM825 981h1v1h-1zM859 981h1v1h-1zM894 981h1v1h-1zM964 981h1v1h-1zM999 981h1v1h-1zM1034 981h1v1h-1zM1069 981h1v1h-1zM1139 981h1v1h-1zM1174 981h1v1h-1zM1209 981h1v1h-1zM1244 981h1v1h-1zM1314 981h1v1h-1zM1349 981h1v1h-1zM1384 981h1v1h-1zM1419 981h1v1h-1zM1489 981h1v1h-1zM1524 981h1v1h-1zM1559 981h1v1h-1zM1594 981h1v1h-1zM1664 981h1v1h-1zM1699 981h1v1h-1zM1734 981h1v1h-1z" fill="#404040"/><path d="M230.5 58V743M230.5 758V993M405.5 58V743M405.5 758V993M580.5 58V743M580.5 758V993M755.5 58V743M755.5 758V993M929.5 58V743M929.5 758V993M1104.5 58V743M1104.5 758V993M1279.5 58V743M1279.5 758V993M1454.5 58V743M1454.5 758V993M1629.5 58V743M1629.5 758V993" stroke="#3c3c3c" stroke-width="1" stroke-dasharray="1 1" fill="none"/><rect x="3" y="173" width="1748" height="2" fill="#5e5e5e"/><rect x="3" y="290" width="1748" height="2" fill="#5e5e5e"/><rect x="3" y="407" width="1748" height="2" fill="#5e5e5e"/><rect x="3" y="524" width="1748" height="2" fill="#5e5e5e"/><rect x="3" y="641" width="1748" height="2" fill="#5e5e5e"/><rect x="3" y="758" width="1748" height="2" fill="#5e5e5e"/><rect x="3" y="875" width="1748" height="2" fill="#5e5e5e"/><path d="M55.5 67V993" stroke="#3a3a3a" stroke-width="1.2" stroke-dasharray="4.5 4.5" fill="none"/></svg><div class="sl" style="right:173px;top:62.5px;color:#161616">40 V</div><div class="sl" style="right:173px;top:85.5px;color:#161616">30 V</div><div class="sl" style="right:173px;top:108.5px;color:#161616">20 V</div><div class="sl" style="right:173px;top:131.5px;color:#161616">10 V</div><div class="sl" style="right:173px;top:154.5px;color:#161616">0 V</div><div class="sl" style="right:173px;top:181.5px;color:#1fb8c8">1.25 V</div><div class="sl" style="right:173px;top:204.5px;color:#1fb8c8">750 mV</div><div class="sl" style="right:173px;top:228.5px;color:#1fb8c8">250 mV</div><div class="sl" style="right:173px;top:251.5px;color:#1fb8c8">-250 mV</div><div class="sl" style="right:173px;top:274.5px;color:#1fb8c8">-750 mV</div><div class="sl" style="right:173px;top:296.5px;color:#d82a4c">1.80 V</div><div class="sl" style="right:173px;top:319.5px;color:#d82a4c">900 mV</div><div class="sl" style="right:173px;top:342.5px;color:#d82a4c">0 V</div><div class="sl" style="right:173px;top:365.5px;color:#d82a4c">-900 mV</div><div class="sl" style="right:173px;top:388.5px;color:#d82a4c">-1.80 V</div><div class="sl" style="right:173px;top:413.5px;color:#6cae30">1 V</div><div class="sl" style="right:173px;top:436.5px;color:#6cae30">600 mV</div><div class="sl" style="right:173px;top:459.5px;color:#6cae30">200 mV</div><div class="sl" style="right:173px;top:482.5px;color:#6cae30">-200 mV</div><div class="sl" style="right:173px;top:505.5px;color:#6cae30">-600 mV</div><div class="sl" style="right:173px;top:530.5px;color:#f08c28">4 V</div><div class="sl" style="right:173px;top:553.5px;color:#f08c28">2 V</div><div class="sl" style="right:173px;top:576.5px;color:#f08c28">0 V</div><div class="sl" style="right:173px;top:599.5px;color:#f08c28">-2 V</div><div class="sl" style="right:173px;top:622.5px;color:#f08c28">-4 V</div><div class="sl" style="right:173px;top:647.5px;color:#2222b4">6 V</div><div class="sl" style="right:173px;top:670.5px;color:#2222b4">4.50 V</div><div class="sl" style="right:173px;top:693.5px;color:#2222b4">3 V</div><div class="sl" style="right:173px;top:716.5px;color:#2222b4">1.50 V</div><div class="sl" style="right:173px;top:739.5px;color:#2222b4">0 V</div><div class="sl" style="right:173px;top:764.5px;color:#e48818">593.074 mT</div><div class="sl" style="right:173px;top:787.5px;color:#e48818">444.805 mT</div><div class="sl" style="right:173px;top:810.5px;color:#e48818">296.537 mT</div><div class="sl" style="right:173px;top:833.5px;color:#e48818">148.268 mT</div><div class="sl" style="right:173px;top:856.5px;color:#e48818">0 T</div><div class="sl" style="right:173px;top:880.5px;color:#5c2a80">9.061 kA</div><div class="sl" style="right:173px;top:903.5px;color:#5c2a80">6.796 kA</div><div class="sl" style="right:173px;top:926.5px;color:#5c2a80">4.531 kA</div><div class="sl" style="right:173px;top:949.5px;color:#5c2a80">2.265 kA</div><div class="sl" style="right:173px;top:973.5px;color:#5c2a80">0 A</div><div class="a" style="left:15.5px;top:740px;width:80px;text-align:center;font-size:13.5px;line-height:16px;color:#2a2a2a;text-shadow:0.6px 0.6px 0 rgba(0,0,0,.6)"><span style="background:#fff;padding:0 1px">0 s</span></div><div class="a" style="left:190.5px;top:740px;width:80px;text-align:center;font-size:13.5px;line-height:16px;color:#2a2a2a;text-shadow:0.6px 0.6px 0 rgba(0,0,0,.6)"><span style="background:#fff;padding:0 1px">4 ms</span></div><div class="a" style="left:365.5px;top:740px;width:80px;text-align:center;font-size:13.5px;line-height:16px;color:#2a2a2a;text-shadow:0.6px 0.6px 0 rgba(0,0,0,.6)"><span style="background:#fff;padding:0 1px">8 ms</span></div><div class="a" style="left:540.5px;top:740px;width:80px;text-align:center;font-size:13.5px;line-height:16px;color:#2a2a2a;text-shadow:0.6px 0.6px 0 rgba(0,0,0,.6)"><span style="background:#fff;padding:0 1px">12 ms</span></div><div class="a" style="left:715.5px;top:740px;width:80px;text-align:center;font-size:13.5px;line-height:16px;color:#2a2a2a;text-shadow:0.6px 0.6px 0 rgba(0,0,0,.6)"><span style="background:#fff;padding:0 1px">16 ms</span></div><div class="a" style="left:889.5px;top:740px;width:80px;text-align:center;font-size:13.5px;line-height:16px;color:#2a2a2a;text-shadow:0.6px 0.6px 0 rgba(0,0,0,.6)"><span style="background:#fff;padding:0 1px">20 ms</span></div><div class="a" style="left:1064.5px;top:740px;width:80px;text-align:center;font-size:13.5px;line-height:16px;color:#2a2a2a;text-shadow:0.6px 0.6px 0 rgba(0,0,0,.6)"><span style="background:#fff;padding:0 1px">24 ms</span></div><div class="a" style="left:1239.5px;top:740px;width:80px;text-align:center;font-size:13.5px;line-height:16px;color:#2a2a2a;text-shadow:0.6px 0.6px 0 rgba(0,0,0,.6)"><span style="background:#fff;padding:0 1px">28 ms</span></div><div class="a" style="left:1414.5px;top:740px;width:80px;text-align:center;font-size:13.5px;line-height:16px;color:#2a2a2a;text-shadow:0.6px 0.6px 0 rgba(0,0,0,.6)"><span style="background:#fff;padding:0 1px">32 ms</span></div><div class="a" style="left:1589.5px;top:740px;width:80px;text-align:center;font-size:13.5px;line-height:16px;color:#2a2a2a;text-shadow:0.6px 0.6px 0 rgba(0,0,0,.6)"><span style="background:#fff;padding:0 1px">36 ms</span></div><svg class="a" style="left:0;top:0" width="1920" height="1080" viewBox="0 0 1920 1080"><defs><clipPath id="gc2"><rect x="3" y="58" width="1748" height="935"/></clipPath></defs><g clip-path="url(#gc2)"><polyline points="3,160.5 5,160.5 7,160.8 9,160.5 11,160.3 13,160.6 15,160.3 17,160.3 19,160.6 21,160.8 23,160.6 25,160.3 25.5,159 26,160.3 27,160.3 29,160.2 31,160.5 33,160.5 35,160.5 37,160.5 39,160.8 41,160.7 43,160.4 45,160.4 47,160.7 49,160.7 51,160.8 53,160.2 55,160.7 57,160.8 59,160.2 61,160.7 63,160.3 65,160.8 67,160.3 69,160.3 71,160.7 73,160.5 75,160.3 77,160.3 79,160.3 81,160.3 83,160.5 83,157 85.3,156.3 87.7,154.9 90,154 92,153.1 94,152.7 96,151.5 98,150.8 100,150.2 102.1,149.9 104.2,149.2 106.2,148.7 108.3,148.3 110.4,148 112.5,147.9 114.6,147.2 116.7,146.5 118.8,146.5 120.8,145.7 122.9,145.6 125,145 127.1,144.6 129.1,144.8 131.2,144.2 133.2,143.8 135.3,143.7 137.4,143.4 139.4,143.4 141.5,142.9 143.5,142.6 145.6,142.7 147.6,142.5 149.7,142.4 151.8,141.7 153.8,141.7 155.9,141.3 157.9,141.3 160,141 162.1,140.8 164.1,141 166.2,140.7 168.2,140.2 170.3,140 172.4,140.3 174.4,139.7 176.5,139.9 178.5,139.6 180.6,139.3 182.6,139.6 184.7,139.4 186.8,139.3 188.8,138.9 190.9,139.1 192.9,138.7 195,138.6 197,138.8 199,138.6 201,138.5 203,138.1 205,138.6 207,138.4 209,138.3 211,138.1 213,137.8 215,138 217.3,138.4 219.7,139.3 222,139.9 224,140.5 226,141 228,141.3 228.5,142.7 229,141.3 230,142 232,142.4 234,142.7 236,143 238,142.8 240,143 242,143.5 244,143.4 246,143.6 248,143.7 250,144 252,144 254,144.8 256,144.4 258,145.1 260,145 262,145.3 264,145.6 266,145.5 268,145.7 270,146 272,146.2 274,146.2 276,146.4 278,146.5 280,146.8 282,147 284,147.2 286,146.8 288,147.3 290,147.1 292,147.7 294,147.7 296,147.8 298,147.7 300,148 302,148 304,147.9 306,147.7 308,147.9 310,147.7 312,147.7 314,147.5 316,147.3 318,147.7 320,147.7 322,147.5 325,145.5 327.5,146.6 330,148 332,147.9 334,148.4 336,148.1 338,148.4 340,148.5 342,149 344,149 344.5,147.7 345,149 346,148.9 348,148.9 350,149.2 352,149 354,149.2 356,149.3 358,149.5 360,149.6 362,149.3 364,149.2 366,149.3 368,149.5 370,149.4 372,149.4 374,149.4 376,149.2 378,149.6 380,149.4 382,149.2 384,149.3 386,149.4 388,149.1 390,149.5 392,149.7 394,149.8 396,149.2 398,149.7 400,149.5 402,149.7 404.1,149.4 406.1,149.4 408.1,149.7 410.2,149.7 412.2,149.2 414.3,149.1 416.3,149.5 418.3,149.1 420.4,149 422.4,149.4 424.4,149.3 426.5,149.3 428.5,149.3 430.6,149.3 432.6,148.9 434.6,149.4 436.7,149.2 438.7,149.2 440.7,149 442.8,149.2 444.8,149.3 446.9,149 448.9,149.1 450.9,148.9 453,148.8 455,149 457.1,149.2 459.3,148.6 461.4,148.8 463.6,148.8 465.7,148.5 467.9,148.8 470,148.6 472,148.6 474,148.8 476,148.7 478,148.5 480,148.8 482,148.6 484,148.7 486,148.8 488,148.4 490,148.4 492,148.4 494,148.6 496,148.7 498,148.3 500,148.5 502,148.4 504,148.6 506,148.4 508,148.5 510,148.8 512,148.3 514,148.4 516,148.7 518,148.8 520,148.6 522,148.6 524,148.7 526,148.3 528,148.3 530,148.3 532,148.5 534,148.5 536,148.3 538,148.7 540,148.5 542.5,147 545,146 547.5,147.5 550,148.5 552,148.2 554,148.7 556,148.3 558,148.2 560,148.4 562,148.2 564,148.3 566,148.1 568,148.2 570,148.3 572,148.4 572.5,149.9 573,148.4 574,148.5 576,148.2 578,148.3 580,148.3 582,147.9 584,148.3 586,148.4 588,148.1 590,148.1 592,147.8 594,148 596,148.1 598,147.9 600,148 602,147.7 604,147.4 606,146.6 608,146.5 610,146.6 612,147.3 614,147.5 616,147.8 618,147.4 620,148 622,148.1 624,147.9 626,147.9 628,148.4 630,148.2 632,148.5 634,148.1 636,148.4 638,148.2 640,148.6 642,148.4 644,148.7 646,148.5 648,148.6 650,148.7 652,149 654,148.6 656,149 658,148.9 660,148.7 662,148.9 664,149 666,148.7 668,149.2 670,149.2 672,148.7 674,149 676,148.8 678,148.8 680,149.2 682,149.2 684,149.1 686,149 688,149.4 690,149 692,149.3 694,149.1 696,149.1 698,149.2 700,149.3 702,149.6 704,149.4 706,149.6 708,149.3 710,149.6 712,149.2 714,149.5 716,149.4 718,149.3 720,149.6 722,149.4 724,149.7 726,149.4 728,149.8 730,149.4 732,149.7 734,150 736,149.7 738,149.6 740,149.7 742,150 744,149.7 746,149.8 748,149.8 750,149.9 752,149.9 754,150 756,150.1 758,149.8 760,150 762,152.7 764.1,152.7 766.1,152.7 768.2,152.8 770.2,152.4 772.3,152.9 774.4,152.4 776.4,152.9 778.5,152.8 780.6,152.8 782.6,152.5 784.7,152.9 786.8,152.9 788.8,152.6 790.9,152.8 792.9,152.7 795,152.7 798,150 800,150.1 802,150 804,150.2 806,150.3 808,150.3 810,150.2 812,150.3 814,150.1 816,150 818,150.5 820,150 822,150.2 824,150.5 826,150.2 828,150.4 830,150.1 832,150.3 834,150.6 836,150.1 838,150.2 840,150.5 842,150.3 844,150.3 846,150.6 848,150.5 850,150.5 852,150.8 854,150.5 856,150.8 858,150.4 860,150.9 862,150.6 864,150.7 866,151 868,150.5 868.5,152.9 869,150.5 870,150.7 872,150.7 874,150.7 876,150.6 878,151 880,150.9 882,150.8 884,150.9 886,150.7 888,150.7 890,150.8 892,150.9 894,151.1 896,151.1 898,151 898.5,149.2 899,151 900,151 902,151.3 904.1,151.2 906.1,151 908.1,150.8 910.1,150.9 912.2,150.7 914.2,151 916.2,150.9 918.2,150.8 920.3,151 922.3,151.2 924.3,150.7 926.4,151.1 928.4,151 930.4,150.7 932.4,151.2 934.5,151.1 936.5,150.9 938.5,150.9 940.5,150.9 942.6,150.9 944.6,151.1 946.6,151.3 948.6,151.1 950.7,151.2 952.7,150.8 954.7,151.1 956.8,150.8 958.8,151.2 960.8,150.8 962.8,150.8 964.9,150.9 966.9,151.3 968.9,151 970.9,151.2 973,150.9 975,151 977.5,152.2 978,154.2 978.5,152.2 980,153.5 982,153.3 984,153.1 986,153.1 988,152.8 990,152.8 992,152.5 994,152.5 996,152.6 998,152.4 1000,152.2 1002,152 1004,152.2 1006,152 1008,152.4 1010,152.4 1012,151.8 1014,152.2 1016,152 1018,151.9 1020,152.2 1022,152.2 1024,152.1 1026,152 1028,151.7 1030,151.7 1032,152.2 1034,151.7 1036,151.6 1038,151.8 1040,151.8 1042,151.9 1044,151.8 1046,152 1048,152.1 1050,151.9 1052,152 1054,151.8 1056,151.5 1058,151.4 1060,151.4 1062,151.6 1064,151.5 1066,151.4 1068,151.7 1070,151.5 1072,151.3 1074,151.8 1076,151.6 1078,151.4 1080,151.5 1082,150 1084,150 1086,150.1 1088,149.8 1090,150.3 1092,150.1 1094,149.8 1096,150 1098,150 1100,150 1102,150.3 1104,150 1106,150 1108,150.4 1110,149.9 1112,150.2 1114,150.4 1116,150.5 1118,150.4 1120,150.2 1122,150.3 1124,150.1 1126,150.3 1128,150.1 1130,150.2 1132,150.5 1134,150.4 1136,150.2 1138,150.5 1140,150.6 1142,150.8 1144,150.6 1146,150.6 1148,150.5 1150,150.8 1152.2,150.8 1154.4,150.3 1156.6,150.4 1158.8,150 1161,150 1163,137.7 1165.3,141 1165.8,139.1 1166.3,141 1167.7,143.7 1170,147 1172.3,149.2 1174.7,150.7 1177,152.7 1179.5,151.1 1182,149 1184.3,148.6 1186.7,148.2 1189,148 1190,157.4 1191,117.4 1193,110 1192,118 1195,104.9 1197,101 1196,104 1198,101.5 1200,98 1202,94.9 1204,93 1207,89 1209.5,85.3 1212,83 1214,84.1 1216,86 1218,86.6 1220,86.7 1222,87.7 1224,88.5 1224.5,86 1225,88.5 1226,89.9 1228,90 1230.3,90.3 1230.8,88.5 1231.3,90.3 1232.7,90.8 1235,92.4 1237.5,93.2 1240,95.5 1242.5,99.3 1245,104.9 1247.3,110.1 1249.7,115.3 1252,120.5 1254,124.7 1256,128.1 1258,131.8 1260,136 1262,137.7 1264,139.9 1266,141.8 1266.5,143.1 1267,141.8 1268,143.3 1270,145.5 1272.1,146.5 1274.3,147.1 1276.4,147.7 1278.6,148.7 1280.7,149.6 1282.9,150.3 1285,151 1287.1,151.1 1289.3,151.8 1291.4,151.8 1293.6,152.4 1295.7,152.7 1297.9,153 1300,153.3 1302,153.5 1304,153.7 1306,154.5 1308,154.7 1310,155 1312,155.3 1314,155.4 1316,155.2 1318,155.4 1320,155.8 1322,156 1324,156 1326,156.4 1328,156.5 1330,156.5 1332,156.5 1334,156.6 1336,156.5 1338,156.8 1340,156.7 1342,156.7 1344,156.9 1346,156.6 1348,156.9 1350,157 1352,157.2 1352.5,159.6 1353,157.2 1354,156.8 1356,156.9 1358,156.8 1360,157.4 1362,157.3 1364,157 1366,157.1 1368,157.5 1370,157.2 1372,157.4 1374,157.3 1376,157.2 1378,157.6 1380,157.5 1382,156.8 1384,156.9 1386,156.8 1388,157.1 1390,157 1392,156.8 1394,156.9 1396,156.7 1398,156.9 1400,156.9 1402,157.1 1404,156.8 1406,156.7 1408,156.9 1410,156.7 1412,156.9 1414,157.3 1416,156.9 1418,156.9 1420,157 1422,157.2 1424,156.8 1426,157.1 1428,157.4 1430,157.3 1432,156.9 1434,157 1436,157.2 1438,157.4 1440,158 1442,157.7 1444,158 1446,157.8 1448,157.9 1450,158.1 1452,157.9 1454,158.2 1456,158 1458,157.9 1460,158 1462,157.8 1464,158.2 1466,158.3 1468,158 1470,158.3 1472,158.2 1474,158.4 1476,158 1478,157.9 1480,158.1 1482,158.1 1484,158.1 1486,157.9 1488,158.1 1490,158.3 1492,157.9 1494,158.1 1496,158.2 1498,158.2 1500,157.9 1502,158.1 1504,158.1 1506,158.2 1508,158.2 1510,158.1 1512,158.1 1514,158.3 1516,158.3 1518,158.2 1520,158.5 1522,158.3 1524,158.4 1526,158.3 1528,158.2 1530,158.5 1532,158.2 1534,158 1536,158.3 1538,158.2 1540,158.1 1542,158.2 1544,158.2 1544.5,159.4 1545,158.2 1546,158.4 1548,158.5 1550,158.5 1552,158.5 1554,158.2 1556,158.1 1558,158.2 1560,158.2 1562,158.2 1564,158.5 1566,158.3 1568,158.3 1570,158.4 1572,158.3 1574,158.7 1576,158.7 1578,158.6 1580,158.3 1582,158.5 1584,158.2 1586,158.4 1588,158.4 1590,158.6 1592,158.3 1594,158.4 1596,158.3 1598,158.3 1600,158.5 1602,158.3 1604.1,158.5 1606.1,158.6 1608.2,158.2 1610.2,158.5 1612.3,158.5 1614.3,158.3 1616.4,158.5 1618.4,158.2 1620.5,158.1 1622.5,158.2 1624.5,158 1626.6,158.5 1628.6,158 1630.7,158.2 1632.7,158.1 1634.8,158.3 1636.8,157.9 1638.9,158 1640.9,158.1 1643,158.2 1645,158 1648,155.5 1650.3,155.4 1652.7,155.8 1655,155.8 1657.1,155.9 1659.3,156.3 1661.4,156.6 1663.6,157 1665.7,156.8 1667.9,157.1 1670,157.5 1672,157.4 1674,157.4 1676.1,157.4 1678.1,157.6 1680.1,157.3 1682.2,157.8 1682.7,159.6 1683.2,157.8 1684.2,158 1686.2,157.9 1688.2,157.7 1690.2,157.7 1692.3,157.8 1694.3,157.9 1696.3,158.1 1698.3,158.1 1700.4,158.1 1702.4,157.7 1704.4,157.7 1706.5,157.7 1708.5,158.1 1710.5,158 1711,156.7 1711.5,158 1712.5,157.9 1714.5,157.9 1716.6,158.3 1718.6,158 1720.6,158.2 1722.7,158.3 1724.7,158.2 1726.7,158.1 1728.7,158.3 1729.2,156.8 1729.7,158.3 1730.8,158.2 1732.8,158.4 1734.8,158.2 1736.8,158.2 1738.8,158.6 1740.9,158.1 1742.9,158.5 1744.9,158.6 1747,158.6 1749,158.2 1751,158.5" fill="none" stroke="#111111" stroke-width="1.3" stroke-linejoin="round" /><polyline points="3,246.5 7,246.5 11,246.6 15,246.2 19,246.4 23,246.6 27,246.5 31,246.3 35,246.3 39,246.2 43,246.2 47,246.4 51,246.7 51.5,244 52,246.7 55,246.5 55.5,189 56.5,205 57,259 57.5,215 58,225 60,221 62,222 66.5,222.2 71,222.5 75.5,222.3 80,222.5 82,217 84,236 85,215 86,234 87,218 88,232 90,222.5 94,222.9 98.1,222.9 102.1,223 106.2,222.8 110.2,222.6 114.2,223 118.3,223 122.3,223.1 126.3,222.9 130.4,223 134.4,223.5 138.5,223.2 142.5,223.3 146.5,223.5 150.6,223.3 154.6,223.8 158.7,223.4 162.7,223.4 166.7,223.8 170.8,223.7 174.8,223.8 178.8,224 182.9,224.2 186.9,224 191,224.2 195,224.5 199,224.6 203.1,224.4 207.1,224.6 211.2,224.6 215.2,224.8 219.2,224.5 223.3,224.7 227.3,224.6 231.3,224.9 235.4,225.2 239.4,225.1 243.5,224.8 247.5,225.1 251.5,225.1 255.6,225.2 259.6,225.3 263.7,225.1 267.7,225.7 271.7,225.5 275.8,225.7 279.8,225.4 280.3,223.7 280.8,225.4 283.8,226 287.9,225.6 291.9,226.2 296,226 300,226 304,226.3 308,226.1 312,226.4 316,226.3 320,226.2 324,226.4 324.5,223.6 325,226.4 328,226.6 332,226.7 336,226.7 340,226.4 344,226.6 348,226.8 352,226.9 356,226.9 360,226.9 364,226.9 368,227.2 372,226.9 376,227.3 380,227.3 384,227.2 384.5,229.6 385,227.2 388,227.3 392,227.5 396,227.7 400,227.4 404,227.5 408,227.8 412,227.7 416,228 420,227.8 424,227.9 428,227.9 432,227.8 436,228 440,228.3 444,228.2 448,228 452,228.2 456,228.1 460,228.7 464,228.3 468,228.8 472,228.6 476,228.6 480,228.8 484,229 488,228.9 492,228.8 496,229.1 500,229 504,229.2 508,229.4 512,229.5 516,229.1 520,229.6 524,229.3 528,229.7 532,229.7 536,229.9 540,229.8 544,229.6 548,230 552,229.9 556,230.1 560,229.8 564,230.3 568,230.3 572,229.9 576,230.2 580,230.1 584,230.1 588,230.4 592,230.4 596,230.7 600,230.6 604,230.9 604.5,232.4 605,230.9 608,230.5 612,230.7 616,231.1 620,231 624,231 628,231.4 632,231 636,231.4 640,231.6 644,231.5 648,231.7 652,231.6 656,231.9 660,231.7 664,231.8 668,231.7 672,232.1 676,231.9 680,231.9 684,232.3 688,232.5 692,232 696,232.1 700,232.2 704,232.4 708,232.5 712,232.7 716,232.9 720,232.7 724,232.9 728,232.6 732,232.8 736,233.3 740,233.1 744,233.1 748,233 752,233.3 756,233.2 760,233.3 764,233.5 768,233.9 772,233.8 776,233.8 780,234.1 784,234 788,233.8 792,234.4 796,233.9 800,234.2 804,234.3 808,234.1 812,234.2 816,234.7 820,234.3 824,234.4 828,234.5 832,234.6 836,234.7 840,234.9 844,234.9 848,235.3 852,235.2 856,235.2 860,235.4 864,235.3 868,235.2 872,235.6 876,235.7 880,235.6 884,235.7 888,235.6 892,236.1 896,235.9 900,236 904,235.9 908,236.4 912,236.3 916,236.1 920,236.7 924,236.6 928,236.9 932,236.9 936,236.7 940,236.7 944,236.7 948,237.1 952,237.2 956,237.3 960,237.1 964,237.8 968,237.8 972,237.7 976,237.7 980,238.1 984,237.9 984.5,240 985,237.9 988,237.8 992,237.9 996,238.1 1000,238.2 1004,238.4 1008,238.2 1012,238.3 1016,238.9 1020,238.7 1024,239 1028,239.1 1032,238.8 1036,239.1 1040,239.2 1044,239.2 1048,239.6 1048.5,237.7 1049,239.6 1052,239.5 1056,239.7 1060,239.8 1064,239.9 1068,239.7 1068.5,241.7 1069,239.7 1072,239.7 1076,240 1080,240.2 1084,240.2 1088,240.6 1092,240.6 1096,240.8 1100,240.6 1104,240.6 1108,240.8 1112,240.6 1116,241.1 1120,240.7 1124,241.2 1128,241.4 1132,241.1 1136,241.1 1140,241.5 1144,241.4 1148,241.2 1152,241.2 1156,241.5 1160,241.6 1162,234 1163,248.5 1164,241.6 1168.2,241.9 1172.3,241.8 1176.5,242 1180.7,242.2 1184.8,242 1189,242 1190,228.4 1191,255.6 1192,234 1193,252 1194,229 1195,250 1197,233 1198,248 1200,236 1201,245 1205,242 1209,242.5 1210,232 1211,248 1212,243 1216,242.9 1220,243.2 1224,243.2 1228,243.5 1229,240 1230,244 1234.4,243.8 1238.8,243.9 1243.2,244.1 1247.6,244 1252,244 1253,241 1254,244.5 1258.5,244.3 1263,244.5 1264,241.5 1265,244.5 1269.2,244.7 1273.3,244.6 1277.5,244.5 1281.7,244.3 1285.8,244.2 1290,244.4 1291,238 1292,248 1293,244.4 1297.1,244.6 1301.3,244.7 1305.4,244.3 1309.6,244.7 1313.7,244.7 1317.9,245 1322,245 1326.1,244.7 1330.3,244.8 1334.4,244.8 1338.6,244.8 1342.7,245.4 1346.9,245.2 1351,244.9 1355.1,245 1359.3,245.3 1363.4,245.2 1367.6,245.7 1368.1,243.6 1368.6,245.7 1371.7,245.5 1375.9,245.6 1380,245.6 1384,245.9 1388,245.7 1392,245.5 1396,245.8 1400,246.2 1400.5,244.6 1401,246.2 1404,245.8 1408,245.9 1412,245.9 1416,245.9 1420,246.3 1424,246.2 1428,246.3 1432,246.6 1436,246.2 1440,246.5 1444.2,246.7 1448.3,246.6 1452.5,246.8 1453,244.7 1453.5,246.8 1456.7,246.7 1460.8,247 1465,247.4 1469.2,247.5 1473.3,247.3 1477.5,247.7 1481.7,247.6 1485.8,248 1490,247.8 1494,247.8 1498,248.2 1502,247.7 1506,248.1 1510,248.4 1514,248.5 1518,248.3 1522,248.3 1526,248.4 1530,248.3 1534,248.4 1538,248.6 1542,248.8 1546,249.1 1550,249 1554,249.1 1554.5,247.2 1555,249.1 1558,248.8 1562,249.2 1566,248.9 1570,249.5 1574,249.1 1578,249.1 1582,249.7 1586,249.7 1590,249.6 1594,249.5 1598,249.7 1602,249.8 1606,249.4 1610,249.8 1614,249.7 1614.5,251.4 1615,249.7 1618,249.8 1622,249.6 1626,249.7 1630,250 1634,250.2 1638.1,249.8 1642.1,250.4 1646.1,250.2 1650.2,250.2 1654.2,250.3 1658.2,250.3 1662.3,250.5 1666.3,250.6 1670.3,250.6 1674.4,250.5 1678.4,250.7 1682.4,250.4 1686.5,250.8 1690.5,250.8 1694.5,250.8 1698.6,250.9 1702.6,250.9 1706.6,251.1 1710.7,251.3 1714.7,251.2 1718.7,251.4 1719.2,248.6 1719.7,251.4 1722.8,251 1726.8,251.5 1730.8,251.1 1734.9,251.6 1738.9,251.1 1742.9,251.2 1747,251.5 1751,251.5" fill="none" stroke="#1fbccc" stroke-width="1.3" stroke-linejoin="round" /><polygon points="1190,301 1193,312 1196,318 1200,320 1205,322 1210,321 1215,322 1220,321 1228,320 1233,318 1236,318 1236,322 1228,325 1220,328 1210,334 1202,341 1197,345 1194,360 1192,374 1190,374" fill="#e02a4e" opacity="0.55"/><polyline points="1190,299.38 1190.75,373.55 1191.5,303.31 1192.25,370.39 1193,309.43 1193.75,360.48 1194.5,314.73 1195.25,353.6 1196,317.83 1196.75,346.95 1197.5,318.43 1198.25,344.18 1199,317.63 1199.75,344.45 1200.5,319.52 1201.25,342.05 1202,317.55 1202.75,342.24 1203.5,317.97 1204.25,339.82 1205,316.57 1205.75,337.81 1206.5,317.28 1207.25,336.99 1208,320.25 1208.75,335.33 1209.5,319.8 1210.25,335.48 1211,320.34 1211.75,334.11 1212.5,318.74 1213.25,332.79 1214,319.12 1214.75,331.28 1215.5,320.8 1216.25,330.66 1217,318.8 1217.75,330.21 1218.5,320.01 1219.25,329.62 1220,319.62 1220.75,328.32 1221.5,318.47 1222.25,328.55 1223,319.93 1223.75,327.74 1224.5,318.99 1225.25,327.78 1226,318.32 1226.75,326.04 1227.5,317.56 1228.25,325.11 1229,318.72 1229.75,325.64 1230.5,319.02 1231.25,324.35 1232,318.91 1232.75,323.96 1233.5,316.97 1234.25,323.02 1235,316.44 1235.75,321.75" fill="none" stroke="#e02a4e" stroke-width="1.0" stroke-linejoin="round" /><polyline points="3,349.5 6,349.2 9,349.8 12,349.1 15,349.1 18,350 21,349.7 24,349.4 27,350.2 30,349.1 33,349.3 36,350.3 39,350.3 42,350.5 45,349.6 48,349.9 51,350.1 54,350 55,302 56,400 57,305 58,390 59,318 60,372 61,338 62,357 64,350 67.3,349.8 70.7,349.7 74,350.4 77.3,350.7 80.7,350.1 84,350 85,330 86,376 87,334 88,370 89,340 90,360 92,351 95,350.5 98,350.9 101,350.6 104.1,350.6 107.1,351.1 110.1,350.4 113.1,350.6 116.1,350.5 119.1,350.3 122.1,351.6 125.2,351.2 128.2,350.3 131.2,351.3 134.2,351.1 137.2,350.8 140.2,351.4 143.2,350.5 146.3,350.7 149.3,350.4 152.3,351 155.3,350.4 158.3,351 161.3,350.6 164.3,350.6 167.4,350.3 170.4,350.3 173.4,350.2 176.4,350.9 179.4,350.1 182.4,350.6 185.4,350.1 188.5,350.2 191.5,350.4 194.5,350.2 197.5,350.6 200.5,350 203.5,350.7 206.6,350.7 209.6,351 212.6,350.1 215.6,351.3 218.6,350.4 221.6,351.2 224.6,350.8 227.7,350.3 230.7,350.3 233.7,350 236.7,350.1 239.7,350.8 240.2,352.6 240.7,350.8 242.7,350.6 245.7,350.4 248.8,350.5 251.8,351.1 254.8,351.1 257.8,350.3 260.8,349.9 263.8,350.4 266.8,351.1 269.9,349.9 272.9,350 275.9,350.3 278.9,350.6 281.9,349.9 284.9,351.1 287.9,350.5 291,350.3 294,350.1 297,350.7 300,350.5 303,350.5 306,350.4 309,350.7 312,351.1 315,350 318,350.9 321,350.2 324.1,350.2 324.6,347.3 325.1,350.2 327.1,350 327.6,352.8 328.1,350 330.1,351.2 333.1,350.4 336.1,351 339.1,350.2 342.1,350 345.1,351.2 348.1,350.2 351.1,350.4 351.6,348.1 352.1,350.4 354.1,350.2 357.1,351.2 360.1,351.1 363.1,350 366.2,350.9 369.2,350 372.2,351.1 375.2,350.9 378.2,351 378.7,348.7 379.2,351 381.2,350.5 384.2,349.8 387.2,349.9 390.2,350.6 393.2,349.9 396.2,351.1 399.2,349.8 402.2,350.9 405.2,350.2 408.3,350.7 411.3,350.4 414.3,350.1 414.8,348.3 415.3,350.1 417.3,350.5 417.8,353.4 418.3,350.5 420.3,351.1 423.3,350.7 426.3,351.2 429.3,350.5 429.8,353.4 430.3,350.5 432.3,351.1 435.3,351 438.3,350.8 441.3,350.6 444.3,350 447.3,350.6 447.8,348.2 448.3,350.6 450.3,350.5 453.4,351 456.4,350.9 459.4,350.6 462.4,351.1 465.4,351.1 468.4,350.7 471.4,350.8 474.4,349.9 477.4,350.4 480.4,350.9 483.4,350.4 486.4,350.6 489.4,349.9 492.4,350 495.5,350.2 498.5,350.1 501.5,350.2 504.5,351.2 505,348.7 505.5,351.2 507.5,351.1 510.5,350.7 513.5,351.2 516.5,350.1 517,352.4 517.5,350.1 519.5,351 522.5,350.8 525.5,350.9 528.5,350 529,347.7 529.5,350 531.5,350.5 534.5,350 537.6,350.4 540.6,350.1 543.6,350.6 546.6,351.1 549.6,350.8 552.6,350.7 555.6,351 558.6,350.2 561.6,350.1 564.6,349.9 567.6,349.9 570.6,350.6 573.6,350.8 576.6,350.3 579.7,349.8 582.7,349.9 585.7,350.9 588.7,350.4 591.7,350 592.2,348.1 592.7,350 594.7,350 597.7,349.8 600.7,350.9 603.7,349.9 606.7,350.6 609.7,351.1 612.7,350.6 615.7,350.5 618.7,350.9 621.7,350.3 622.2,352.3 622.7,350.3 624.8,350.4 627.8,350.6 630.8,351 633.8,350.6 636.8,350.4 639.8,350.9 642.8,350.8 645.8,350.6 648.8,350.1 651.8,350.4 654.8,351.1 655.3,352.8 655.8,351.1 657.8,351.1 660.8,350.7 663.8,350.1 666.9,350.4 669.9,350.1 672.9,350.1 675.9,350.1 676.4,347.9 676.9,350.1 678.9,350.8 681.9,350.4 684.9,350 687.9,349.9 690.9,350.6 693.9,351.1 696.9,350.5 697.4,353 697.9,350.5 699.9,350.1 702.9,350.4 705.9,351 709,349.9 712,350.1 715,350.5 718,350 721,350.8 721.5,348.9 722,350.8 724,350.8 727,350.7 730,350.6 733,350.5 736,350.8 736.5,349 737,350.8 739,351.1 742,350.3 745,351.2 748,350.9 751,350.4 754.1,350.9 757.1,351 760.1,351.1 763.1,350.9 766.1,350.5 769.1,350.9 772.1,350.4 775.1,350.2 778.1,349.8 781.1,350.4 784.1,350.9 787.1,349.8 790.1,351.1 793.1,350.6 796.2,350.8 799.2,350.7 802.2,350 805.2,351.2 805.7,353.1 806.2,351.2 808.2,350 811.2,350.4 811.7,348.8 812.2,350.4 814.2,350.3 817.2,350.7 820.2,350 823.2,351 826.2,350.8 829.2,350.8 832.2,350.3 835.2,350.3 838.3,350.9 841.3,351 844.3,351.1 847.3,350.6 847.8,353.1 848.3,350.6 850.3,350.2 853.3,350.4 856.3,350.1 859.3,350.3 859.8,352.5 860.3,350.3 862.3,350.1 862.8,347.9 863.3,350.1 865.3,349.9 868.3,350.1 871.3,350.7 874.3,349.8 877.3,349.8 880.3,350.3 883.4,350.8 886.4,350.4 889.4,350 892.4,349.9 895.4,350.9 898.4,350.7 901.4,351 904.4,350.1 907.4,351.2 907.9,349.3 908.4,351.2 910.4,350.9 913.4,350.4 916.4,350.2 916.9,347.6 917.4,350.2 919.4,350.2 922.4,350.6 925.5,350 928.5,350.4 931.5,350.2 934.5,350.8 937.5,350.1 940.5,350.5 943.5,349.9 946.5,350.1 949.5,351.2 952.5,350.1 955.5,350.2 956,353.2 956.5,350.2 958.5,350.5 961.5,350.4 964.5,350.4 967.6,350.2 970.6,350.5 971.1,347.6 971.6,350.5 973.6,349.9 976.6,350.8 977.1,352.8 977.6,350.8 979.6,350.6 982.6,350.5 985.6,350 988.6,351.1 991.6,350.9 994.6,349.9 997.6,350 1000.6,350.4 1003.6,350.5 1006.6,350.6 1009.7,350.4 1012.7,350.3 1015.7,350.2 1018.7,351.2 1021.7,350.2 1024.7,351 1027.7,350.1 1030.7,349.9 1033.7,350.1 1036.7,351.1 1039.7,350.2 1042.7,349.8 1043.2,352 1043.7,349.8 1045.7,350.3 1048.7,349.8 1051.7,350 1054.8,349.9 1057.8,349.8 1060.8,350 1063.8,350.9 1066.8,351.2 1069.8,350.6 1072.8,349.9 1075.8,350.7 1078.8,350.9 1081.8,350.2 1084.8,350.6 1087.8,351.1 1090.8,350.6 1093.8,351 1096.9,350.4 1099.9,350.9 1102.9,350.6 1105.9,350.5 1108.9,350.2 1111.9,350 1114.9,350.6 1115.4,347.8 1115.9,350.6 1117.9,350.9 1120.9,351 1123.9,350.3 1126.9,350.1 1129.9,351 1132.9,350.4 1135.9,350.6 1136.4,352.5 1136.9,350.6 1139,351.1 1142,350.7 1142.5,348.7 1143,350.7 1145,350.1 1148,350.1 1151,349.8 1154,351.2 1154.5,348.2 1155,351.2 1157,350.1 1157.5,348.1 1158,350.1 1160,350.5 1161,340 1162,359.5 1163,342 1165,345 1168,350 1171,350.6 1174,351.8 1177,352.5 1181,351.8 1185,350.5 1189,350 1190,301.4 1191,374.5 1193,315 1194,360 1196,318 1197,345 1200,320 1202,340 1205,322 1207,336 1210,321 1212,333 1215,322 1217,330 1220,322 1223,327 1228,320 1231,323 1235,318 1238,316 1241,313 1244,311 1247,312 1250,317.8 1253,322.7 1256,328 1260,334.4 1264,339.7 1268,342.4 1272,344.3 1276,345.5 1280,346.7 1283.7,346.7 1287.3,347.5 1291,348.3 1294.2,347.9 1297.3,348.4 1300.5,349 1303.7,349 1306.8,349.2 1310,349.5 1313,349.3 1316,349.7 1319,349.7 1322,349.7 1325,349.4 1328,349.6 1331,349.6 1334,349.3 1337,349.6 1340,349.4 1343,349.3 1346,349.4 1349,349.3 1352,349.4 1355,349.5 1358,349.3 1361,349.7 1364,349.3 1367,349.3 1370,349.7 1373,349.3 1376,349.5 1379,349.7 1382,349.4 1385,349.5 1388,349.5 1391,349.4 1394,349.7 1397,349.6 1400,349.3 1403,349.6 1406,349.6 1409,349.7 1412,349.5 1415,349.7 1418,349.5 1421,349.7 1424,349.4 1427,349.6 1430,349.5 1433,349.4 1436,349.3 1439,349.6 1442,349.5 1445,349.6 1448,349.5 1451,349.3 1454,349.6 1457,349.6 1460,349.3 1463,349.5 1466,349.7 1469,349.4 1472,349.7 1475,349.5 1478,349.7 1481,349.7 1484,349.5 1487,349.7 1490,349.3 1493,349.5 1496,349.5 1499,349.3 1502,349.4 1505,349.7 1508,349.4 1511,349.3 1514,349.3 1517,349.7 1520,349.7 1523,349.3 1526,349.6 1529,349.5 1532,349.5 1535,349.5 1538,349.3 1541,349.7 1544,349.6 1547,349.7 1550,349.7 1553,349.7 1556,349.3 1559,349.4 1562,349.7 1565,349.6 1568,349.6 1571,349.6 1574,349.7 1577,349.5 1580,349.5 1583,349.7 1586,349.6 1589,349.7 1592,349.3 1595,349.3 1598,349.4 1601,349.5 1604,349.3 1607,349.5 1610,349.7 1613,349.4 1616,349.5 1619,349.7 1622,349.4 1625,349.5 1628,349.4 1631,349.3 1634,349.5 1637,349.6 1640,349.4 1643,349.4 1646,349.6 1649,349.5 1652,349.7 1655,349.7 1658,349.4 1661,349.3 1664,349.5 1667,349.6 1670,349.4 1673,349.3 1676,349.4 1679,349.3 1682,349.6 1685,349.7 1688,349.3 1688.5,351.7 1689,349.3 1691,349.3 1694,349.5 1697,349.4 1700,349.3 1703,349.5 1706,349.4 1709,349.4 1712,349.4 1715,349.3 1718,349.4 1721,349.7 1724,349.5 1727,349.7 1730,349.5 1733,349.7 1736,349.7 1739,349.4 1742,349.3 1745,349.5 1748,349.4 1751,349.5" fill="none" stroke="#e02a4e" stroke-width="1.4" stroke-linejoin="round" /><polyline points="3,478.5 8,478.3 13.1,478.6 18.1,478.4 23.2,478.6 28.2,478.4 33.3,478.4 38.3,478.3 43.4,478.7 48.4,478.4 53.5,478.6 58.5,478.5 63.5,478.3 68.6,478.3 73.6,478.3 78.7,478.7 83.7,478.7 88.8,478.6 93.8,478.6 98.9,478.5 103.9,478.3 109,478.7 114,478.3 119,478.4 124.1,478.5 129.1,478.7 134.2,478.4 139.2,478.6 144.3,478.5 149.3,478.5 154.4,478.5 159.4,478.5 164.5,478.5 169.5,478.5 174.5,478.7 179.6,478.3 184.6,478.6 189.7,478.3 194.7,478.7 199.8,478.4 204.8,478.7 209.9,478.4 214.9,478.6 220,478.4 225,478.5 230,476.3 235,474.6 240,473.7 245,472.2 250,471 255,469.7 260,468.6 265,467.6 270,466.9 275,465.6 280,465 285,463.9 290,464 295,463.9 300,464.1 305,463.9 310,463.9 315,464.2 320,464.1 325,464.2 330,463.9 335,464 340,464 345,464 350,464.1 355,464.2 360,464.4 365,464.5 370,464.5 375,464.7 380,464.8 385,465 390,465.2 395,465.3 400,465.4 405,465.4 410,465.6 415,465.4 420,465.7 425,466.1 430,466 435,465.8 440,466.3 445,465.9 450,466 455,466.3 460,466.3 465,466.3 470,466 475,466.2 475.5,467.3 476,466.2 480,466.4 485,466 490,466.1 495,466.3 500,466.3 505,466.4 505.5,467.8 506,466.4 510,466.5 515,466.3 520,466.6 525,466.2 530,466.5 535,466.6 540,466.6 545,466.6 550,466.4 555,466.6 560,466.5 565,466.6 570,466.5 575,466.3 580,466.6 585,466.6 590,466.5 595,466.5 600,466.5 605,466.8 610,466.4 615,466.8 620,466.8 625,466.6 630,466.8 635,466.6 640,466.8 645,466.8 650,466.9 655,466.8 660,466.7 665,466.9 670,467 675,467.1 680,466.7 685,467 690,467 695,467.2 700,467.1 705,467 710,466.8 715,467.2 720,467 725,467 730,467.1 735,467 740,467.2 745,467.3 750,467.2 755,467.2 760,467.1 765,467.5 770,467.5 775,467.3 780,467.2 785,467.4 790,467.6 795,467.7 800,467.4 805,467.5 810,467.8 815,467.7 820,467.9 825,467.9 830,467.9 835,467.8 840,468.1 845,467.9 850,467.9 855,468 860,468 865,467.9 870,467.8 875,467.8 880,467.8 885,467.4 890,467.3 895,467.4 900,467.4 905,467.2 910,467.5 915,467.6 920,467.2 925,467.4 930,467.6 935,467.6 940,467.6 945,467.6 950,467.5 955,467.3 960,467.2 965,467.2 970,467.5 975,467.3 980,467.3 985,467.5 990,467.3 995,467.4 1000,467.6 1005,467.6 1010,467.2 1015,467.4 1020,467.6 1025,467.3 1030,467.6 1035,467.5 1040,467.6 1045,467.6 1050,467.6 1055,467.2 1060,467.2 1065,467.3 1070,467.3 1075,467.4 1080,467.2 1085,467.3 1090,467.4 1095,467.6 1100,467.4 1105,467.3 1110,467.2 1115,467.2 1120,467.3 1125,467.3 1130,467.4 1135,467.3 1140,467 1145,467 1150,466.5 1155,465.7 1160,464.6 1165,463.5 1170,464.4 1175,465.5 1181,465.7 1187,465.7 1190,457.7 1195,457.6 1200,457.5 1205,458 1210,458.2 1215,458.5 1221.5,459.5 1228,460 1233.7,461.4 1239.3,463 1245,464.3 1251,466.7 1257,468.5 1263,471 1268.5,472.1 1274,472.7 1279.5,473.5 1285,474.5 1290.4,474.7 1295.8,475.5 1301.2,475.4 1306.6,476.1 1312,476.3 1317,476.6 1322,476.8 1327,476.7 1332,476.9 1337,477.1 1342,477.6 1347,477.6 1352.1,477.4 1357.1,477.4 1362.2,477.4 1367.2,477.8 1372.3,477.5 1377.3,477.9 1382.4,477.9 1387.4,477.8 1392.5,477.8 1397.5,477.8 1402.6,477.5 1407.6,477.4 1412.7,477.6 1417.7,477.8 1422.8,477.6 1427.8,477.9 1432.9,477.7 1433.4,478.5 1433.9,477.7 1437.9,477.7 1443,477.6 1448,477.9 1453.1,477.7 1458.1,477.5 1463.2,477.7 1468.2,477.8 1473.3,477.6 1478.3,478 1483.4,477.7 1488.4,477.6 1493.5,477.7 1498.5,477.7 1503.6,477.6 1508.6,477.7 1513.7,477.5 1518.7,477.8 1523.8,477.7 1528.8,477.7 1533.9,477.7 1538.9,477.9 1544,478 1549,477.7 1554.1,478 1559.1,477.8 1564.2,478 1569.2,477.7 1574.3,478 1579.3,477.9 1584.4,477.8 1589.4,477.7 1594.5,478.1 1599.5,478 1604.6,477.7 1609.6,477.9 1614.7,478.1 1619.7,478 1624.8,478.1 1629.8,478 1634.9,477.8 1639.9,477.7 1645,477.9 1650,477.8 1655.1,478.1 1660.1,478.1 1665.2,478 1670.2,478 1675.3,478.1 1680.3,477.8 1685.4,478.2 1690.4,477.8 1695.5,477.9 1700.5,478.1 1705.6,478.1 1710.6,478 1715.7,477.8 1720.7,478.2 1725.8,478.2 1730.8,477.7 1735.9,478.2 1740.9,478.2 1746,478.2 1751,478" fill="none" stroke="#78b83a" stroke-width="1.3" stroke-linejoin="round" /><polyline points="3,583.5 1751,583.5" fill="none" stroke="#f2902c" stroke-width="1.5" stroke-linejoin="round" /><polyline points="3,745 55.5,745 55.5,653.7 84,653.7 84,643" fill="none" stroke="#1c1cae" stroke-width="1.4" stroke-linejoin="round" /><polyline points="91,643 93.5,653.7 1163,653.7 1163.5,647 1165,654 1191.5,654 1191.5,643.5" fill="none" stroke="#1c1cae" stroke-width="1.4" stroke-linejoin="round" /><polyline points="1196,643.5 1201,654 1209,654 1209.5,643" fill="none" stroke="#1c1cae" stroke-width="1.4" stroke-linejoin="round" /><polyline points="1213,643 1217,654 1227.5,654 1228,644 1232,654 1751,654" fill="none" stroke="#1c1cae" stroke-width="1.4" stroke-linejoin="round" /><polyline points="42,863.5 55,863 100,858.4 230,841 405,821.4 580,805 755,791.8 900,783.4 1000,778 1100,775 1200,773.2 1310,771.8 1460,771.6 1470,772.5 1560,772.5 1600,774.5 1700,775.5 1751,776.7" fill="none" stroke="#e4861c" stroke-width="1.2" stroke-linejoin="round" /><polyline points="42,980 46.1,980.2 46.6,979.1 47.1,980.2 50.3,980.2 50.8,978.4 51.3,980.2 54.4,980.2 58.6,979.8 62.7,979.7 66.9,979.6 71,980 75.1,979.5 79.3,979.7 83.4,979.6 87.6,979.4 91.7,979.5 95.9,979.8 100,979.5 104.1,979.4 108.2,979.8 112.3,979.7 112.8,978.2 113.3,979.7 116.4,979.5 120.5,979.6 121,980.8 121.5,979.6 124.6,979.6 128.8,979.3 132.9,979.5 137,979.2 141.1,979.2 145.2,979.3 149.3,979.2 153.4,979.3 157.5,979.2 161.6,979.4 165.7,979.4 169.8,979 173.9,979.1 174.4,981 174.9,979.1 178,979.3 182.1,978.9 186.2,979.4 190.4,979.1 194.5,979.4 198.6,978.8 202.7,979.1 206.8,979.2 210.9,979.1 215,979 219,978.1 219.5,979.9 220,978.1 223,978 227,976.9 231,976.4 235,975.9 239,975.5 243.1,975.1 247.1,974.6 251.2,974.5 255.2,974.1 255.7,975.4 256.2,974.1 259.3,973.8 263.3,973.3 267.4,972.6 271.4,972.3 275.5,971.8 279.5,971.3 283.6,971.2 287.6,970.9 291.7,970.2 295.7,969.6 299.8,969.4 303.8,969.1 307.9,968.9 311.9,968.4 312.4,966.7 312.9,968.4 316,967.8 320,967.3 324,967.1 328.1,966.6 332.1,966.3 336.2,966.1 340.2,965.5 344.3,965.1 348.3,964.6 352.4,964.3 356.4,963.5 360.5,963.6 364.5,962.8 368.6,962.9 372.6,962 376.7,961.7 380.7,961.2 384.8,961 388.8,960.8 392.9,960.3 396.9,959.7 401,959.5 405,959 409.1,958.8 413.1,958.1 417.2,958.3 421.3,957.5 425.3,957.2 429.4,957.2 433.5,957 437.6,956.3 441.6,955.8 445.7,955.4 449.8,955.4 453.8,955.3 457.9,954.6 462,954.4 466,954.1 470.1,953.9 474.2,953.7 478.3,953.2 482.3,952.5 486.4,952.2 490.5,952.1 494.5,951.7 498.6,951.7 502.7,951 506.7,950.7 510.8,950.4 514.9,950 519,949.7 523,949.5 527.1,949.4 531.2,948.8 535.2,948.4 539.3,948.5 543.4,947.7 547.4,947.6 551.5,947.3 555.6,947.1 559.7,946.4 563.7,946.1 567.8,945.8 571.9,945.7 575.9,945.5 580,944.9 584.1,944.6 588.1,944 592.2,943.7 596.3,943.5 600.3,943.4 604.4,943 608.5,942.4 612.6,942.2 616.6,942 620.7,941.5 624.8,941.3 628.8,940.5 632.9,940.2 637,939.7 641,939.6 645.1,939.4 649.2,938.9 653.3,938.7 657.3,938.4 661.4,937.9 665.5,937.6 669.5,937.3 673.6,936.7 677.7,936.3 681.7,936.3 685.8,935.9 689.9,935.3 694,935.4 698,935 702.1,934.4 706.2,934.1 710.2,933.7 710.7,932.1 711.2,933.7 714.3,933.6 718.4,933.2 722.4,932.7 726.5,932.2 730.6,932.3 734.7,931.9 738.7,931.4 742.8,930.7 746.9,930.4 750.9,930.5 755,929.9 759,929.8 763.1,929.4 767.1,928.8 771.1,928.9 775.1,928.2 779.2,927.9 783.2,927.7 787.2,927.6 791.2,927.1 795.3,926.7 799.3,926.6 803.3,925.8 807.4,925.5 811.4,925.4 815.4,924.8 819.4,924.8 823.5,924.5 827.5,924.2 831.5,924 835.6,923.1 839.6,922.9 843.6,922.7 847.6,922.6 851.7,922.4 855.7,921.8 859.7,921.3 863.8,921.1 867.8,921 871.8,920.7 875.8,919.9 879.9,920.1 883.9,919.3 887.9,919.5 891.9,918.6 896,918.3 900,918.2 904,918.1 908,917.9 908.5,916.2 909,917.9 912,917.3 916,917.6 920,917 924,917 928,916.7 932,916.6 936,916.5 940,915.8 944,915.7 948,915.6 952,915.5 956,915 960,915 964,914.7 968,914.5 972,914.3 976,914.4 980,913.8 984,913.8 988,913.5 992,912.9 996,912.7 1000,912.4 1004,912.5 1008,912.4 1012,911.7 1016,911.9 1020,911.4 1024,911.4 1028,911.3 1032,911.1 1036,910.9 1040,910.7 1044,910.2 1048,910.3 1052,910 1052.5,908.4 1053,910 1056,909.8 1060,909.1 1064,908.8 1068,908.9 1068.5,910.9 1069,908.9 1072,908.8 1076,908.6 1080,907.8 1084,908.2 1088,907.8 1092,907.2 1096,907.4 1100,907 1104.1,907 1108.1,906.6 1112.2,906.1 1116.3,906.1 1120.3,905.9 1124.4,905.5 1128.5,905.5 1132.5,905.3 1136.6,905 1140.7,904.9 1144.7,904.4 1148.8,904.2 1152.9,904 1156.9,903.5 1161,903.4 1163,909 1166,906 1170,905 1174,904.1 1178,903.4 1182,904.1 1186,904.3 1190,904.8 1191,918 1195.5,923.4 1200,929 1204,934.2 1208,939.4 1212,944.6 1216.5,947.8 1221,951.2 1225.5,954.5 1230,958 1235.5,964.3 1241,971.2 1245.5,973.4 1250,975.6 1254.3,975.9 1258.7,976.6 1263,976.9 1267.3,977.8 1271.7,978.4 1276,978.7 1280,978.7 1284.1,978.6 1288.1,978.8 1292.1,978.5 1296.1,978.6 1300.2,978.9 1304.2,978.8 1308.2,978.8 1312.2,978.7 1316.3,979 1320.3,978.9 1324.3,978.9 1328.3,978.9 1328.8,977.7 1329.3,978.9 1332.4,978.6 1336.4,978.9 1340.4,979 1344.4,978.8 1348.5,978.5 1352.5,978.5 1356.5,979 1360.5,978.6 1364.6,978.5 1368.6,979 1372.6,979 1376.6,978.5 1380.7,978.7 1384.7,978.9 1388.7,978.6 1392.7,978.7 1396.8,978.5 1400.8,978.8 1404.8,978.9 1408.8,979 1412.9,979 1416.9,978.5 1420.9,978.6 1424.9,978.8 1429,978.9 1433,978.7 1437,979 1441,978.8 1445.1,978.9 1449.1,978.7 1453.1,978.9 1457.1,978.6 1461.2,978.8 1465.2,978.6 1469.2,978.8 1473.2,979.1 1477.3,978.9 1481.3,978.6 1485.3,978.8 1489.3,978.7 1493.4,979 1497.4,979.1 1501.4,978.6 1505.4,978.9 1509.5,978.6 1510,980.5 1510.5,978.6 1513.5,978.8 1517.5,978.7 1521.6,978.8 1525.6,978.6 1529.6,979 1530.1,980.2 1530.6,979 1533.6,979.1 1537.7,978.6 1541.7,978.8 1545.7,979 1549.7,978.7 1553.8,979 1557.8,978.9 1561.8,978.7 1565.8,978.8 1569.9,978.6 1573.9,979.2 1577.9,979.1 1581.9,978.9 1586,978.6 1590,978.9 1594,978.9 1598,978.9 1602.1,979 1606.1,978.7 1610.1,978.9 1614.1,978.8 1618.2,979 1622.2,979.1 1626.2,978.8 1630.2,978.8 1634.3,979.1 1638.3,979.2 1642.3,979.1 1646.3,978.8 1650.4,979 1654.4,978.9 1654.9,980.1 1655.4,978.9 1658.4,978.8 1662.4,979.1 1666.5,979 1670.5,979.2 1671,980.4 1671.5,979.2 1674.5,979 1678.5,978.9 1682.6,979.1 1686.6,979.2 1690.6,979.2 1694.6,979.1 1698.7,978.9 1702.7,978.7 1706.7,979.1 1710.7,978.8 1714.8,978.7 1718.8,979.2 1722.8,978.9 1726.8,978.9 1730.9,979 1734.9,978.8 1738.9,978.8 1742.9,979.3 1747,978.7 1751,979" fill="none" stroke="#6e2a90" stroke-width="1.2" stroke-linejoin="round" /><path d="M3 161.5 H1718" stroke="#383838" stroke-width="1.1" stroke-dasharray="5 5" fill="none"/><path d="M3 246.5 H1718" stroke="#383838" stroke-width="1.1" stroke-dasharray="5 5" fill="none"/><path d="M3 349.5 H1718" stroke="#383838" stroke-width="1.1" stroke-dasharray="5 5" fill="none"/><path d="M3 478.5 H1718" stroke="#383838" stroke-width="1.1" stroke-dasharray="5 5" fill="none"/><path d="M3 583.5 H1718" stroke="#383838" stroke-width="1.1" stroke-dasharray="5 5" fill="none"/><path d="M3 863.5 H1718" stroke="#383838" stroke-width="1.1" stroke-dasharray="5 5" fill="none"/><path d="M3 980.5 H1718" stroke="#383838" stroke-width="1.1" stroke-dasharray="5 5" fill="none"/></g><path d="M55.5 742.5V758" stroke="#3a3a3a" stroke-width="1.2" stroke-dasharray="4.5 4.5" fill="none"/><path d="M45 58H66L55.5 67.5Z" fill="#f7901e"/><path d="M46 644H65V663H59L55.5 669L52 663H46Z" fill="#000" stroke="#f7901e" stroke-width="2"/><text x="55.5" y="660" font-family="Liberation Sans" font-weight="bold" font-size="15" fill="#f7901e" text-anchor="middle">T</text><path d="M597 41H610V53H606L603.5 56L601 53H597Z" fill="#000" stroke="#f7901e" stroke-width="1.6"/><text x="603.5" y="51.5" font-family="Liberation Sans" font-weight="bold" font-size="11" fill="#f7901e" text-anchor="middle">T</text><path d="M596 33H611L603.5 38.5Z" fill="#f7901e"/><path d="M1711 64.5H1741Q1744.5 64.5 1744.5 68V96Q1744.5 100 1741 97Z" fill="#474747" stroke="#2a2a2a" stroke-width="1"/><circle cx="1737" cy="72" r="4.5" fill="none" stroke="#9a9a9a" stroke-width="1.8"/><path d="M1733.5 75.5L1728 81" stroke="#9a9a9a" stroke-width="2.4" stroke-linecap="round"/><path d="M1730.5 700.5L1741.7 691V710Z" fill="#2626c0"/><rect x="1740" y="698.5" width="11" height="4" fill="#2626c0"/></svg><svg class="a" style="left:5px;top:101.5px" width="79.5" height="28"><path d="M4 1 H72 L78.5 14 L72 27 H4 Q1 27 1 24 V4 Q1 1 4 1Z" fill="#e6e6e6" stroke="#1e1e1e" stroke-width="2.1" stroke-linejoin="round"/><rect x="27" y="1" width="2" height="26" fill="#1e1e1e"/></svg><svg class="a" style="left:5px;top:218px" width="79.5" height="28"><path d="M4 1 H72 L78.5 14 L72 27 H4 Q1 27 1 24 V4 Q1 1 4 1Z" fill="#e6f7f8" stroke="#22c6d0" stroke-width="2.1" stroke-linejoin="round"/><rect x="27" y="1" width="2" height="26" fill="#22c6d0"/></svg><svg class="a" style="left:5px;top:336px" width="38" height="28"><path d="M4 1 H30.5 L37 14 L30.5 27 H4 Q1 27 1 24 V4 Q1 1 4 1Z" fill="#fde9ee" stroke="#ef6e88" stroke-width="1.6" stroke-linejoin="round"/></svg><svg class="a" style="left:5px;top:452.5px" width="79.5" height="28"><path d="M4 1 H72 L78.5 14 L72 27 H4 Q1 27 1 24 V4 Q1 1 4 1Z" fill="#f0f6e6" stroke="#7cc23e" stroke-width="2.1" stroke-linejoin="round"/><rect x="27" y="1" width="2" height="26" fill="#7cc23e"/></svg><svg class="a" style="left:5px;top:570px" width="38" height="28"><path d="M4 1 H30.5 L37 14 L30.5 27 H4 Q1 27 1 24 V4 Q1 1 4 1Z" fill="#fdf0e4" stroke="#f4a458" stroke-width="1.6" stroke-linejoin="round"/></svg><svg class="a" style="left:5px;top:686.5px" width="79.5" height="28"><path d="M4 1 H72 L78.5 14 L72 27 H4 Q1 27 1 24 V4 Q1 1 4 1Z" fill="#e8e8f6" stroke="#111111" stroke-width="2.1" stroke-linejoin="round"/><path d="M4 2 H28 V26 H4 Q2 26 2 24 V4 Q2 2 4 2Z" fill="#2828c0"/><rect x="27" y="1" width="2" height="26" fill="#111111"/></svg><svg class="a" style="left:5px;top:850px" width="38" height="26"><path d="M4 1 H30.5 L37 13 L30.5 25 H4 Q1 25 1 22 V4 Q1 1 4 1Z" fill="#fdf0e4" stroke="#f4a458" stroke-width="1.6" stroke-linejoin="round"/></svg><svg class="a" style="left:5px;top:966px" width="38" height="27"><path d="M4 1 H30.5 L37 13.5 L30.5 26 H4 Q1 26 1 23 V4 Q1 1 4 1Z" fill="#f3eaf7" stroke="#b684cc" stroke-width="1.6" stroke-linejoin="round"/></svg><div class="a" style="left:11px;top:107.5px;font-size:12px;line-height:16px;color:#2a2a2a">C 1</div><div class="a" style="left:45px;top:107.5px;font-size:12.5px;line-height:16px;color:#222">20 V</div><div class="a" style="left:11px;top:224px;font-size:12px;line-height:16px;color:#111">C 2</div><div class="a" style="left:35.5px;top:224px;font-size:12px;line-height:16px;color:#111">300 mV</div><div class="a" style="left:14px;top:342px;font-size:13px;line-height:16px;color:#e8607a">C 3</div><div class="a" style="left:11px;top:458.5px;font-size:12px;line-height:16px;color:#111">C 4</div><div class="a" style="left:36px;top:458.5px;font-size:12px;line-height:16px;color:#111">200 mV</div><div class="a" style="left:14px;top:576px;font-size:12.5px;line-height:16px;color:#111">C 5</div><div class="a" style="left:11px;top:693px;font-size:12px;line-height:16px;color:#fff">C 6</div><div class="a" style="left:47px;top:693px;font-size:12.5px;line-height:16px;color:#2828c0">3 V</div><div class="a" style="left:12px;top:855.5px;font-size:12.5px;line-height:16px;color:#111">M 1</div><div class="a" style="left:12px;top:971.5px;font-size:13px;line-height:16px;color:#8a50a8">M 2</div><div class="a" style="left:101px;top:103px;font-size:19.6px;line-height:24px;color:#111;">U_loop,coil</div><div class="a" style="left:101px;top:220px;font-size:19.8px;line-height:24px;color:#1fbccc;text-shadow:1px 1px 0 rgba(0,0,0,.55)">U_Bt,coil</div><div class="a" style="left:54px;top:336.5px;font-size:19px;line-height:24px;color:#dc2a4c;text-shadow:1px 1px 0 rgba(0,0,0,.55)">U_Rog,coil</div><div class="a" style="left:101px;top:453px;font-size:19.8px;line-height:24px;color:#74b43a;text-shadow:1px 1px 0 rgba(0,0,0,.55)">U_Photod</div><div class="a" style="left:54px;top:570px;font-size:19.3px;line-height:24px;color:#f08c28;text-shadow:1px 1px 0 rgba(0,0,0,.55)">U_Diamagn</div><div class="a" style="left:100px;top:688px;font-size:20px;line-height:24px;color:#1c1cae;">Trigger</div><div class="a" style="left:54px;top:842px;font-size:24.5px;line-height:24px;color:#e4861c;text-shadow:1px 1px 0 rgba(0,0,0,.55)">B_t</div><div class="a" style="left:54px;top:967px;font-size:20.5px;line-height:24px;letter-spacing:-1.2px;color:#6e2a90;text-shadow:1px 1px 0 rgba(0,0,0,.55)">I_p</div><svg class="a" style="left:1780px;top:0" width="135" height="30"><text x="5.5" y="26" font-family="Liberation Sans" font-weight="bold" font-size="30.5" fill="#fff" stroke="#fff" stroke-width="0.7" textLength="28" lengthAdjust="spacingAndGlyphs">Te</text><rect x="35" y="4" width="5.2" height="22" fill="#fff"/><path d="M34.8 26L45.6 9H50.9L40.1 26Z" fill="#1ec0dc"/><path d="M43 26L45.6 18.6L50 26Z" fill="#fff"/><text x="51" y="26" font-family="Liberation Sans" font-weight="bold" font-size="30.5" fill="#fff" stroke="#fff" stroke-width="0.7" textLength="72" lengthAdjust="spacingAndGlyphs">tronix</text></svg><div class="a" style="left:1769px;top:29px;width:151px;height:967px;border-left:1px solid #6a645e;border-top:1px solid #6a645e;border-bottom:1px solid #6a645e;box-sizing:border-box"></div><div class="a" style="left:1770px;top:30px;width:150px;text-align:center;font-size:15px;font-weight:bold;color:#e8e8e8;letter-spacing:0.8px;line-height:18px">Add New...</div><div class="btn" style="left:1778px;top:54px;width:63px;height:37px;line-height:32.5px;font-size:15.3px">Cursors</div><div class="btn" style="left:1850px;top:54px;width:63px;height:37px;line-height:32.5px;font-size:15.3px">Callout</div><div class="btn" style="left:1778px;top:100px;width:63px;height:37px;line-height:32.5px;font-size:15.3px">Measure</div><div class="btn" style="left:1850px;top:100px;width:63px;height:37px;line-height:32.5px;font-size:15.3px">Search</div><div class="btn" style="left:1850px;top:146px;width:63px;height:37px;line-height:32.5px;font-size:15.3px">Plot</div><div class="btn" style="left:1850px;top:196px;width:63px;height:37px;line-height:32.5px;font-size:15.3px">More...</div><div class="btn" style="left:1778px;top:146px;width:63px;height:37px;line-height:15.5px;padding-top:1px;font-size:15.3px">Results<br>Table</div><div class="btn" style="left:1778px;top:196px;width:63px;height:37px"></div><svg class="a" style="left:1795px;top:201px" width="32" height="27"><rect x="2" y="2" width="22" height="19" fill="none" stroke="#b4b4b4" stroke-width="2" stroke-dasharray="3 2"/><circle cx="13" cy="11" r="5" fill="none" stroke="#c0c0c0" stroke-width="2"/><path d="M9.5 14.5L5 19" stroke="#c0c0c0" stroke-width="2.5" stroke-linecap="round"/><path d="M17 16L27 21L22 22L24 26L22 27L20 23L17 26Z" fill="#b8b8b8"/></svg><div class="a" style="left:1773px;top:189px;width:144px;height:1px;background:#5c5650"></div><div class="a" style="left:1773px;top:241px;width:144px;height:1px;background:#5c5650"></div><svg class="a" style="left:1758px;top:500px" width="8" height="26"><circle cx="4" cy="4" r="2.2" fill="#a8a8a8"/><circle cx="4" cy="12.5" r="2.2" fill="#a8a8a8"/><circle cx="4" cy="21" r="2.2" fill="#a8a8a8"/></svg><div class="a" style="left:0;top:995px;width:1920px;height:85px;background:#2e2e2e"></div><div class="bdg" style="left:3px;top:984px;width:90px;height:94.5px"><div class="bh" style="background:#202020;color:#f4ec3c;height:19px">Ch 1</div><div class="a" style="left:0;top:18.5px;width:90px;height:2px;background:#a8a8a8"></div><div class="a" style="left:0;top:20.5px;width:90px;height:17.5px;background:#ff0000"><svg class="a" style="left:0px;top:2px" width="17" height="15"><path d="M8.5 1L16 14H1Z" fill="#f2ea00" stroke="#3a3470" stroke-width="1.2" stroke-linejoin="round"/><rect x="7.6" y="5" width="1.8" height="7.5" fill="#b8b050"/></svg><div class="a" style="left:16px;top:-2px;color:#fff;font-size:15.3px;line-height:19px;letter-spacing:0.2px">Clipping</div></div><div class="ln" style="top:39px;line-height:19px;">5 V/div</div><div class="ln" style="top:58px;line-height:19px;">1 M&Omega;</div><div class="ln" style="top:77px;line-height:19px;">200 kHz</div><div class="bw" style="left:72px;top:76.5px;line-height:10px">B<span style="position:relative;top:3.5px;left:-1px">w</span></div></div><div class="bdg" style="left:98px;top:984px;width:90px;height:94.5px"><div class="bh" style="background:#1c4446;color:#2ec4d4;height:19px">Ch 2</div><div class="a" style="left:0;top:18.5px;width:90px;height:2px;background:#a8a8a8"></div><div class="a" style="left:0;top:20.5px;width:90px;height:17.5px;background:#ff0000"><svg class="a" style="left:0px;top:2px" width="17" height="15"><path d="M8.5 1L16 14H1Z" fill="#f2ea00" stroke="#3a3470" stroke-width="1.2" stroke-linejoin="round"/><rect x="7.6" y="5" width="1.8" height="7.5" fill="#b8b050"/></svg><div class="a" style="left:16px;top:-2px;color:#fff;font-size:15.3px;line-height:19px;letter-spacing:0.2px">Clipping</div></div><div class="ln" style="top:39px;line-height:19px;">250 mV/div</div><div class="ln" style="top:58px;line-height:19px;">1 M&Omega;</div><div class="ln" style="top:77px;line-height:19px;">200 kHz</div><div class="bw" style="left:72px;top:76.5px;line-height:10px">B<span style="position:relative;top:3.5px;left:-1px">w</span></div></div><div class="bdg" style="left:193px;top:984px;width:90px;height:94.5px"><div class="bh" style="background:#4a2528;color:#f4e4e4;height:19px">Ch 3</div><div class="a" style="left:0;top:18.5px;width:90px;height:2px;background:#a8a8a8"></div><div class="a" style="left:0;top:20.5px;width:90px;height:17.5px;background:#ff0000"><svg class="a" style="left:0px;top:2px" width="17" height="15"><path d="M8.5 1L16 14H1Z" fill="#f2ea00" stroke="#3a3470" stroke-width="1.2" stroke-linejoin="round"/><rect x="7.6" y="5" width="1.8" height="7.5" fill="#b8b050"/></svg><div class="a" style="left:16px;top:-2px;color:#fff;font-size:15.3px;line-height:19px;letter-spacing:0.2px">Clipping</div></div><div class="ln" style="top:39px;line-height:19px;">450 mV/div</div><div class="ln" style="top:58px;line-height:19px;">1 M&Omega;</div><div class="ln" style="top:77px;line-height:19px;">200 kHz</div><div class="bw" style="left:72px;top:76.5px;line-height:10px">B<span style="position:relative;top:3.5px;left:-1px">w</span></div></div><div class="bdg" style="left:288px;top:1003px;width:90px;height:75.5px"><div class="bh" style="background:#38421e;color:#8cc43c;height:19px">Ch 4</div><div class="a" style="left:0;top:18.5px;width:90px;height:1.5px;background:#8c8c8c"></div><div class="ln" style="top:20px;line-height:19px;">200 mV/div</div><div class="ln" style="top:39px;line-height:19px;">1 M&Omega;</div><div class="ln" style="top:58px;line-height:19px;">200 kHz</div><div class="bw" style="left:72px;top:57.5px;line-height:10px">B<span style="position:relative;top:3.5px;left:-1px">w</span></div></div><div class="bdg" style="left:383px;top:1003px;width:90px;height:75.5px"><div class="bh" style="background:#4a3420;color:#f4a040;height:19px">Ch 5</div><div class="a" style="left:0;top:18.5px;width:90px;height:1.5px;background:#8c8c8c"></div><div class="ln" style="top:20px;line-height:19px;">1 V/div</div><div class="ln" style="top:39px;line-height:19px;">1 M&Omega;</div><div class="ln" style="top:58px;line-height:19px;">200 kHz</div><div class="bw" style="left:72px;top:57.5px;line-height:10px">B<span style="position:relative;top:3.5px;left:-1px">w</span></div></div><div class="bdg" style="left:478px;top:984px;width:90px;height:94.5px"><div class="bh" style="background:#2a22c2;color:#ffffff;height:19px">Ch 6</div><div class="a" style="left:0;top:18.5px;width:90px;height:2px;background:#a8a8a8"></div><div class="a" style="left:0;top:20.5px;width:90px;height:17.5px;background:#ff0000"><svg class="a" style="left:0px;top:2px" width="17" height="15"><path d="M8.5 1L16 14H1Z" fill="#f2ea00" stroke="#3a3470" stroke-width="1.2" stroke-linejoin="round"/><rect x="7.6" y="5" width="1.8" height="7.5" fill="#b8b050"/></svg><div class="a" style="left:16px;top:-2px;color:#fff;font-size:15.3px;line-height:19px;letter-spacing:0.2px">Clipping</div></div><div class="ln" style="top:39px;line-height:19px;">750 mV/div</div><div class="ln" style="top:58px;line-height:19px;">1 M&Omega;</div><div class="ln" style="top:77px;line-height:19px;">200 kHz</div><div class="bw" style="left:72px;top:76.5px;line-height:10px">B<span style="position:relative;top:3.5px;left:-1px">w</span></div></div><div class="bdg" style="left:573px;top:1003px;width:90px;height:75.5px"><div class="bh" style="background:#4a3420;color:#f4a040;height:19px">Math 1</div><div class="a" style="left:0;top:18.5px;width:90px;height:1.5px;background:#8c8c8c"></div><div class="ln" style="top:20px;line-height:19px;font-weight:bold">74.1 mT/div</div><div class="ln" style="top:39px;line-height:19px;">Intg(Ch2)&hellip;</div></div><div class="bdg" style="left:668px;top:1003px;width:90px;height:75.5px"><div class="bh" style="background:#2e2230;color:#ffffff;height:19px">Math 2</div><div class="a" style="left:0;top:18.5px;width:90px;height:1.5px;background:#8c8c8c"></div><div class="ln" style="top:20px;line-height:19px;font-weight:bold">1.132 kA/&hellip;</div><div class="ln" style="top:39px;line-height:19px;">-Intg(Ch3&hellip;</div></div><div class="a" style="left:1118px;top:1000px;width:1px;height:77px;background:#5c5650"></div><div class="a" style="left:1269px;top:1000px;width:1px;height:77px;background:#5c5650"></div><div class="a" style="left:1811px;top:1000px;width:1px;height:77px;background:#5c5650"></div><div class="btn" style="left:1129px;top:999px;width:40px;height:79px;font-size:14.5px;line-height:16px;padding-top:19px;border-radius:6px">Add<br>New<br>Math<div class="a" style="left:3px;top:6.5px;width:32px;height:2px;background:#c02028"></div></div><div class="btn" style="left:1174px;top:999px;width:40px;height:79px;font-size:14.5px;line-height:16px;padding-top:19px;border-radius:6px">Add<br>New<br>Ref<div class="a" style="left:3px;top:6.5px;width:32px;height:2px;background:#c8c8e0"></div></div><div class="btn" style="left:1219px;top:999px;width:40px;height:79px;font-size:14.5px;line-height:16px;padding-top:19px;border-radius:6px">Add<br>New<br>Bus<div class="a" style="left:3px;top:6.5px;width:32px;height:2px;background:#c050e8"></div></div><div class="bdg" style="left:1281px;top:1003px;width:198px;height:75.5px;border:1px solid #1a1a1a"><div class="bh" style="background:#565656;color:#f2f2f2;height:18px;line-height:17px;font-size:16px;padding-left:4px">Horizontal</div><div class="a" style="left:0;top:18.5px;right:0;height:2px;background:#a4a4a4"></div><div class="a" style="left:3px;top:18.5px;font-size:14.6px;line-height:18px;color:#141414;">4 ms/div</div><div class="a" style="left:110px;top:18.5px;font-size:14.6px;line-height:18px;color:#141414;">40 ms</div><div class="a" style="left:3px;top:37.5px;font-size:14.6px;line-height:18px;color:#141414;">SR: 1 MS/s</div><div class="a" style="left:110px;top:37.5px;font-size:14.6px;line-height:18px;color:#141414;">1 &micro;s/pt</div><div class="a" style="left:3px;top:56.5px;font-size:14.6px;line-height:18px;color:#141414;">RL: 40 kpts</div><div class="a" style="left:125px;top:56.5px;font-size:14.6px;line-height:18px;color:#141414;">3%</div><svg class="a" style="left:109px;top:59px" width="11" height="13"><path d="M1 1H10V9H7L5.5 12L4 9H1Z" fill="#000" stroke="#f7901e" stroke-width="1.3"/><text x="5.5" y="8" font-family="Liberation Sans" font-weight="bold" font-size="7.5" fill="#fff" text-anchor="middle">T</text></svg></div><div class="bdg" style="left:1485px;top:1003px;width:159px;height:75.5px;border:1px solid #1a1a1a"><div class="bh" style="background:#565656;color:#f2f2f2;height:18px;line-height:17px;font-size:16px;padding-left:4px">Trigger</div><div class="a" style="left:0;top:18.5px;right:0;height:2px;background:#a4a4a4"></div><div class="a" style="left:4px;top:21px;width:29px;height:14px;border-radius:5px;background:#2828c8;border:1px solid #101060;color:#fff;font-size:13px;line-height:14px;text-align:center">6</div><svg class="a" style="left:45px;top:22px" width="18" height="14"><path d="M1 12H4L12 3H16" fill="none" stroke="#2a2aa0" stroke-width="1.2"/></svg><div class="a" style="left:69px;top:18.5px;font-size:14.6px;line-height:18px;color:#141414;">3 V</div></div><div class="bdg" style="left:1650px;top:1003px;width:150px;height:75.5px;border:1px solid #1a1a1a"><div class="bh" style="background:#565656;color:#f2f2f2;height:18px;line-height:17px;font-size:16px;padding-left:4px">Acquisition</div><div class="a" style="left:0;top:18.5px;right:0;height:2px;background:#a4a4a4"></div><div class="a" style="left:4px;top:18.5px;font-size:14.6px;line-height:18px;color:#141414;">Manual,</div><div class="a" style="left:86px;top:18.5px;font-size:14.6px;line-height:18px;color:#141414;">Analyze</div><div class="a" style="left:4px;top:37.5px;font-size:14.6px;line-height:18px;color:#141414;">High Res: 16 bits</div><div class="a" style="left:4px;top:56.5px;font-size:14.6px;line-height:18px;color:#141414;">Single: 1 /1</div></div><div class="a" style="left:1822px;top:999px;width:90px;height:36px;box-sizing:border-box;background:#ff2020;border:1px solid #777;border-radius:6px;color:#fff;font-weight:bold;font-size:14px;text-align:center;line-height:33px">Stopped</div><div class="a" style="left:1822px;top:1040px;width:90px;height:38px;box-sizing:border-box;background:#c8c8c8;border-radius:5px;color:#141414;font-size:15px;text-align:center;line-height:17.5px;padding-top:1px">06 May 2025<br>4:31:29 PM</div></body></html>
